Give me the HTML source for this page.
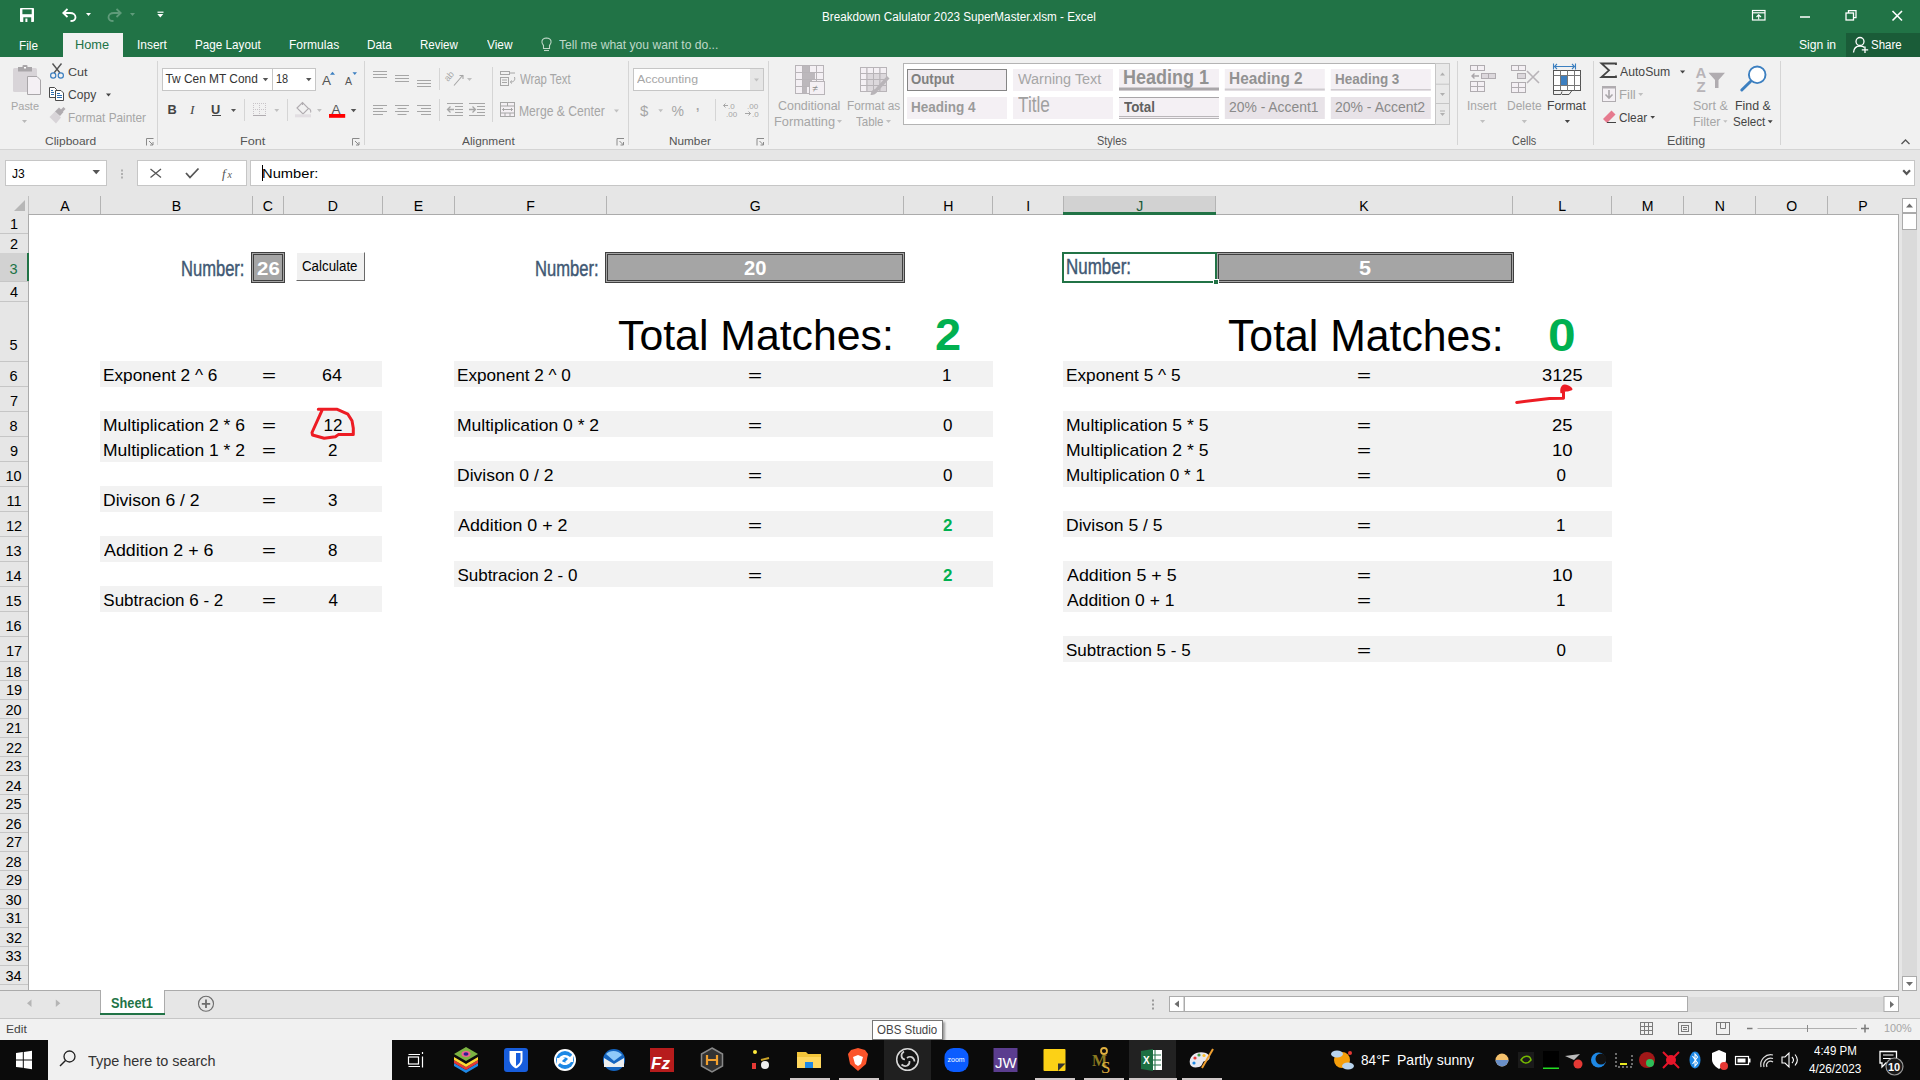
<!DOCTYPE html><html><head><meta charset='utf-8'><style>
*{margin:0;padding:0;box-sizing:border-box}
html,body{width:1920px;height:1080px;overflow:hidden;background:#fff;font-family:"Liberation Sans",sans-serif}
.a{position:absolute}
.t{position:absolute;white-space:pre;transform-origin:0 0}
svg{position:absolute;overflow:visible}
</style></head><body>

<div class='a' style='left:0px;top:0px;width:1920px;height:57px;background:#217346;'></div>
<div class='a' style='left:63px;top:33px;width:60px;height:24px;background:#f1f1f1;'></div>
<div class='a' style='left:1846px;top:33px;width:74px;height:24px;background:#1a5c38;'></div>
<div class='a' style='left:0;top:57px;width:1920px;height:92px;background:#f1f1f1'></div>
<div class='a' style='left:0px;top:149px;width:1920px;height:1px;background:#d4d4d4;'></div>
<div class='a' style='left:0px;top:150px;width:1920px;height:46px;background:#e6e6e6;'></div>
<div class='a' style='left:5px;top:160px;width:102px;height:26px;background:#fff;border:1px solid #c6c6c6;'></div>
<div class='a' style='left:137px;top:160px;width:110px;height:26px;background:#fff;border:1px solid #c6c6c6;'></div>
<div class='a' style='left:250px;top:160px;width:1665px;height:26px;background:#fff;border:1px solid #c6c6c6;'></div>
<svg style='left:0;top:0' width='1920' height='200'><rect x='20' y='8' width='14' height='14' rx='0.8' fill='#fff'/><rect x='22.4' y='9.4' width='9.3' height='4.8' fill='#217346'/><rect x='23.3' y='17.3' width='7.9' height='4.7' fill='#217346'/><rect x='25.4' y='18.5' width='2' height='3.5' fill='#fff'/><path d='M64,13 H70 C73.5,13 75.5,15 75.5,17.2 C75.5,19.5 73.5,21 70.5,21' fill='none' stroke='#fff' stroke-width='1.8'/><path d='M67.5,9 L63.3,13 L67.5,17' fill='none' stroke='#fff' stroke-width='1.8'/><polygon points='86,13 91,13 88.5,16.0' fill='#fff'/><path d='M120,13 H114 C110.5,13 108.5,15 108.5,17.2 C108.5,19.5 110.5,21 113.5,21' fill='none' stroke='#5f9b7a' stroke-width='1.8'/><path d='M116.5,9 L120.7,13 L116.5,17' fill='none' stroke='#5f9b7a' stroke-width='1.8'/><polygon points='130,13 135,13 132.5,16.0' fill='#5f9b7a'/><line x1='157.5' y1='12.2' x2='163.5' y2='12.2' stroke='#fff' stroke-width='1.2'/><polygon points='157.3,14 163.3,14 160.3,17.5' fill='#fff'/><rect x='1752.5' y='10.5' width='12.5' height='9.5' fill='none' stroke='#fff' stroke-width='1.2'/><line x1='1752.5' y1='12.8' x2='1765' y2='12.8' stroke='#fff' stroke-width='1.2'/><path d='M1758.7,19.5 V15 M1756.5,17 L1758.7,14.8 L1761,17' fill='none' stroke='#fff' stroke-width='1.1'/><line x1='1800' y1='17' x2='1810' y2='17' stroke='#fff' stroke-width='1.5'/><rect x='1846' y='13' width='7.5' height='7' fill='none' stroke='#fff' stroke-width='1.3'/><path d='M1848.5,13 V10.7 H1856 V17.7 H1853.5' fill='none' stroke='#fff' stroke-width='1.3'/><path d='M1892.5,11 L1902,20.5 M1902,11 L1892.5,20.5' stroke='#fff' stroke-width='1.6'/><circle cx='1860' cy='41.5' r='4' fill='none' stroke='#fff' stroke-width='1.3'/><path d='M1853.5,52.5 C1854,47 1857,46 1860,46 C1862,46 1863.5,46.5 1864.5,47.5' fill='none' stroke='#fff' stroke-width='1.3'/><path d='M1865,46.5 V53 M1861.8,49.8 H1868.2' stroke='#fff' stroke-width='1.3'/><path d='M543.5,45.5 C541,43 541,38.5 546.5,38 C552,38.5 552,43 549.5,45.5 V48.5 H543.5 Z' fill='none' stroke='#bfd8c8' stroke-width='1.1'/><line x1='544' y1='50.5' x2='549' y2='50.5' stroke='#bfd8c8' stroke-width='1.1'/><rect x='13' y='68' width='24' height='24' rx='1.5' fill='#d8d4d8'/><rect x='18' y='67' width='14' height='4.5' fill='#a9a6a9'/><rect x='22.5' y='65' width='5' height='3' rx='1' fill='#a9a6a9'/><rect x='24' y='67' width='2' height='1.5' fill='#fff'/><path d='M27.5,76.5 H37 L40.5,80 V94.5 H27.5 Z' fill='#f4f0f4' stroke='#a9a6a9' stroke-width='1'/><polygon points='22,120 27,120 24.5,123.0' fill='#b9b9b9'/><path d='M52.5,63.5 L60,73 M61.5,63.5 L54,73' stroke='#555' stroke-width='1.4'/><circle cx='53.2' cy='75.5' r='2.6' fill='none' stroke='#3c7fc0' stroke-width='1.2'/><circle cx='60.8' cy='75.5' r='2.6' fill='none' stroke='#3c7fc0' stroke-width='1.2'/><path d='M49.5,87.5 H54.5 L56.5,89.5 V97.5 H49.5 Z' fill='#fff' stroke='#4a4a4a' stroke-width='1'/><path d='M55.5,90.5 H61 L63.5,93 V100.5 H55.5 Z' fill='#fff' stroke='#4a4a4a' stroke-width='1'/><path d='M51,90.5 H53 M51,92.5 H54 M51,94.5 H54 M57,93.5 H60 M57,95.5 H62 M57,97.5 H62' stroke='#2b6cb0' stroke-width='1'/><polygon points='106,93.5 111,93.5 108.5,96.5' fill='#444444'/><path d='M49.5,117 L55,111.5 L61,117.5 L56,123.5 Z' fill='#d8d4d8'/><path d='M55,111.5 L59,107.5 L63.5,112 L60,116 Z' fill='#b0acb0'/><path d='M60.5,110 L63.5,107 L65.5,109 L62.5,112 Z' fill='#b0acb0'/><path d='M146.5,145.5 V138.5 H153.5' fill='none' stroke='#8a8a8a' stroke-width='1'/><path d='M149.0,141.0 L153.0,145.0 M153.0,142.0 V145.0 H150.0' fill='none' stroke='#8a8a8a' stroke-width='1'/><path d='M352.5,145.5 V138.5 H359.5' fill='none' stroke='#8a8a8a' stroke-width='1'/><path d='M355.0,141.0 L359.0,145.0 M359.0,142.0 V145.0 H356.0' fill='none' stroke='#8a8a8a' stroke-width='1'/><path d='M617,145.5 V138.5 H624' fill='none' stroke='#8a8a8a' stroke-width='1'/><path d='M619.5,141.0 L623.5,145.0 M623.5,142.0 V145.0 H620.5' fill='none' stroke='#8a8a8a' stroke-width='1'/><path d='M757,145.5 V138.5 H764' fill='none' stroke='#8a8a8a' stroke-width='1'/><path d='M759.5,141.0 L763.5,145.0 M763.5,142.0 V145.0 H760.5' fill='none' stroke='#8a8a8a' stroke-width='1'/><line x1='157.5' y1='61' x2='157.5' y2='145' stroke='#d5d5d5' stroke-width='1'/><line x1='364.5' y1='61' x2='364.5' y2='145' stroke='#d5d5d5' stroke-width='1'/><line x1='628.5' y1='61' x2='628.5' y2='145' stroke='#d5d5d5' stroke-width='1'/><line x1='768.5' y1='61' x2='768.5' y2='145' stroke='#d5d5d5' stroke-width='1'/><line x1='1457.5' y1='61' x2='1457.5' y2='145' stroke='#d5d5d5' stroke-width='1'/><line x1='1593.5' y1='61' x2='1593.5' y2='145' stroke='#d5d5d5' stroke-width='1'/><line x1='1780.5' y1='61' x2='1780.5' y2='145' stroke='#d5d5d5' stroke-width='1'/><rect x='162.5' y='68.5' width='110' height='22' fill='#fff' stroke='#c6c6c6' stroke-width='1'/><rect x='272.5' y='68.5' width='43' height='22' fill='#fff' stroke='#c6c6c6' stroke-width='1'/><polygon points='262.8,78 268.2,78 265.5,81.19999999999999' fill='#555'/><polygon points='306,78 311.5,78 308.75,81.25' fill='#555'/><text x='322' y='85' font-family='Liberation Sans' font-size='13.5' fill='#555'>A</text><polygon points='330,74.8 335,74.8 332.5,71.8' fill='#3c7fc0'/><text x='345' y='85' font-family='Liberation Sans' font-size='10.5' fill='#555'>A</text><polygon points='352.5,72.3 357,72.3 354.75,75.05' fill='#3c7fc0'/><text x='167.5' y='114' font-family='Liberation Sans' font-weight='bold' font-size='12.8' fill='#444'>B</text><text x='190' y='114' font-family='Liberation Serif' font-style='italic' font-size='13.5' fill='#444'>I</text><text x='211' y='114' font-family='Liberation Sans' font-weight='bold' font-size='12.8' fill='#444'>U</text><line x1='212' y1='115.5' x2='221' y2='115.5' stroke='#444' stroke-width='1'/><polygon points='231,109 236,109 233.5,112.0' fill='#555'/><line x1='244.5' y1='99' x2='244.5' y2='121' stroke='#d5d5d5' stroke-width='1'/><g fill='#c8c4c8'><rect x='253' y='103' width='1' height='1'/><rect x='253' y='109' width='1' height='1'/><rect x='255' y='103' width='1' height='1'/><rect x='255' y='109' width='1' height='1'/><rect x='257' y='103' width='1' height='1'/><rect x='257' y='109' width='1' height='1'/><rect x='259' y='103' width='1' height='1'/><rect x='259' y='109' width='1' height='1'/><rect x='261' y='103' width='1' height='1'/><rect x='261' y='109' width='1' height='1'/><rect x='263' y='103' width='1' height='1'/><rect x='263' y='109' width='1' height='1'/><rect x='265' y='103' width='1' height='1'/><rect x='265' y='109' width='1' height='1'/><rect x='253' y='103' width='1' height='1'/><rect x='259' y='103' width='1' height='1'/><rect x='265' y='103' width='1' height='1'/><rect x='253' y='105' width='1' height='1'/><rect x='259' y='105' width='1' height='1'/><rect x='265' y='105' width='1' height='1'/><rect x='253' y='107' width='1' height='1'/><rect x='259' y='107' width='1' height='1'/><rect x='265' y='107' width='1' height='1'/><rect x='253' y='109' width='1' height='1'/><rect x='259' y='109' width='1' height='1'/><rect x='265' y='109' width='1' height='1'/><rect x='253' y='111' width='1' height='1'/><rect x='259' y='111' width='1' height='1'/><rect x='265' y='111' width='1' height='1'/><rect x='253' y='113' width='1' height='1'/><rect x='259' y='113' width='1' height='1'/><rect x='265' y='113' width='1' height='1'/></g><line x1='253' y1='115.5' x2='266' y2='115.5' stroke='#b0acb0' stroke-width='1'/><polygon points='274.3,109 279.2,109 276.75,111.94999999999999' fill='#c0c0c0'/><line x1='287.5' y1='99' x2='287.5' y2='121' stroke='#d5d5d5' stroke-width='1'/><path d='M297,108 L302.5,102.5 L308.5,108.5 L303,114 Z' fill='none' stroke='#b0acb0' stroke-width='1.1'/><path d='M302.5,102.5 V105 M308.5,108.5 C311,109 311,112 310.5,112.5' fill='none' stroke='#b0acb0' stroke-width='1.1'/><rect x='295' y='114.3' width='16' height='3' fill='#e2dee2'/><polygon points='317,109 321.8,109 319.4,111.9' fill='#c0c0c0'/><text x='331.5' y='113.8' font-family='Liberation Sans' font-size='13.5' fill='#555'>A</text><rect x='329' y='114' width='16.2' height='3.8' fill='#ff0000'/><polygon points='350.8,109 356.3,109 353.55,112.25' fill='#555'/><line x1='373' y1='71.5' x2='387' y2='71.5' stroke='#a6a6a6' stroke-width='1'/><line x1='373' y1='74.5' x2='387' y2='74.5' stroke='#a6a6a6' stroke-width='1'/><line x1='373' y1='77.5' x2='387' y2='77.5' stroke='#a6a6a6' stroke-width='1'/><line x1='395' y1='75.5' x2='409' y2='75.5' stroke='#a6a6a6' stroke-width='1'/><line x1='395' y1='78.5' x2='409' y2='78.5' stroke='#a6a6a6' stroke-width='1'/><line x1='395' y1='81.5' x2='409' y2='81.5' stroke='#a6a6a6' stroke-width='1'/><line x1='417' y1='80.5' x2='431' y2='80.5' stroke='#a6a6a6' stroke-width='1'/><line x1='417' y1='83.5' x2='431' y2='83.5' stroke='#a6a6a6' stroke-width='1'/><line x1='417' y1='86.5' x2='431' y2='86.5' stroke='#a6a6a6' stroke-width='1'/><line x1='439.5' y1='68' x2='439.5' y2='90' stroke='#d5d5d5' stroke-width='1'/><text x='0' y='0' transform='translate(448,82) rotate(-50)' font-family='Liberation Sans' font-size='9' fill='#a6a6a6'>ab</text><path d='M454,85.5 L463,75 M459.5,75.5 H463 V79' fill='none' stroke='#a6a6a6' stroke-width='1.1'/><polygon points='467,78 472,78 469.5,81.0' fill='#c0c0c0'/><line x1='373' y1='105.5' x2='387' y2='105.5' stroke='#a6a6a6' stroke-width='1'/><line x1='395' y1='105.5' x2='409' y2='105.5' stroke='#a6a6a6' stroke-width='1'/><line x1='417' y1='105.5' x2='431' y2='105.5' stroke='#a6a6a6' stroke-width='1'/><line x1='373' y1='108.5' x2='383' y2='108.5' stroke='#a6a6a6' stroke-width='1'/><line x1='397.5' y1='108.5' x2='406.5' y2='108.5' stroke='#a6a6a6' stroke-width='1'/><line x1='421' y1='108.5' x2='431' y2='108.5' stroke='#a6a6a6' stroke-width='1'/><line x1='373' y1='111.5' x2='387' y2='111.5' stroke='#a6a6a6' stroke-width='1'/><line x1='395' y1='111.5' x2='409' y2='111.5' stroke='#a6a6a6' stroke-width='1'/><line x1='417' y1='111.5' x2='431' y2='111.5' stroke='#a6a6a6' stroke-width='1'/><line x1='373' y1='114.5' x2='383' y2='114.5' stroke='#a6a6a6' stroke-width='1'/><line x1='397.5' y1='114.5' x2='406.5' y2='114.5' stroke='#a6a6a6' stroke-width='1'/><line x1='421' y1='114.5' x2='431' y2='114.5' stroke='#a6a6a6' stroke-width='1'/><line x1='439.5' y1='99' x2='439.5' y2='121' stroke='#d5d5d5' stroke-width='1'/><line x1='447' y1='103.5' x2='463' y2='103.5' stroke='#a6a6a6' stroke-width='1'/><line x1='447' y1='115.5' x2='463' y2='115.5' stroke='#a6a6a6' stroke-width='1'/><line x1='455' y1='106.5' x2='463' y2='106.5' stroke='#a6a6a6' stroke-width='1'/><line x1='455' y1='109.5' x2='463' y2='109.5' stroke='#a6a6a6' stroke-width='1'/><line x1='455' y1='112.5' x2='463' y2='112.5' stroke='#a6a6a6' stroke-width='1'/><path d='M447.5,109.5 H454 M450.5,106.5 L447.5,109.5 L450.5,112.5' fill='none' stroke='#a6a6a6' stroke-width='1.3'/><line x1='469' y1='103.5' x2='485' y2='103.5' stroke='#a6a6a6' stroke-width='1'/><line x1='469' y1='115.5' x2='485' y2='115.5' stroke='#a6a6a6' stroke-width='1'/><line x1='477' y1='106.5' x2='485' y2='106.5' stroke='#a6a6a6' stroke-width='1'/><line x1='477' y1='109.5' x2='485' y2='109.5' stroke='#a6a6a6' stroke-width='1'/><line x1='477' y1='112.5' x2='485' y2='112.5' stroke='#a6a6a6' stroke-width='1'/><path d='M469,109.5 H475.5 M472.5,106.5 L475.5,109.5 L472.5,112.5' fill='none' stroke='#a6a6a6' stroke-width='1.3'/><line x1='492.5' y1='67' x2='492.5' y2='122' stroke='#d5d5d5' stroke-width='1'/><g fill='none' stroke='#a6a6a6' stroke-width='1'><rect x='500.5' y='71.5' width='9' height='3'/><rect x='500.5' y='77.5' width='8' height='8'/><path d='M502,80 H507 M502,82.5 H507 M509.5,73 H515 M514.5,77 C515.5,80 514,82 510.5,82 M512,80.5 L510.3,82 L512,83.5'/></g><g fill='#f4f0f4' stroke='#a6a6a6' stroke-width='1'><rect x='500.5' y='102.5' width='14' height='14'/></g><path d='M500.5,106 H514.5 M500.5,113 H514.5 M507.5,102.5 V106 M505,113 V116.5 M510,113 V116.5 M502.5,109.5 H512.5 M504,108 L502.5,109.5 L504,111 M511,108 L512.5,109.5 L511,111' fill='none' stroke='#a6a6a6' stroke-width='1'/><polygon points='614,109.5 619,109.5 616.5,112.5' fill='#c0c0c0'/><rect x='633.5' y='68.5' width='130' height='22' fill='#fff' stroke='#c6c6c6' stroke-width='1'/><rect x='750' y='69' width='13' height='21' fill='#e6e6e6'/><polygon points='754,78.5 759,78.5 756.5,81.5' fill='#c0c0c0'/><text x='640' y='115.5' font-family='Liberation Sans' font-size='15' fill='#a6a6a6'>$</text><polygon points='658.3,109.3 663,109.3 660.65,112.15000000000002' fill='#c0c0c0'/><text x='671.5' y='115.5' font-family='Liberation Sans' font-size='14' fill='#a6a6a6'>%</text><text x='696' y='110' font-family='Liberation Sans' font-weight='bold' font-size='12' fill='#a6a6a6'>,</text><line x1='715.5' y1='99' x2='715.5' y2='121' stroke='#d5d5d5' stroke-width='1'/><text x='728' y='109' font-family='Liberation Sans' font-size='8' fill='#a6a6a6'>.0</text><text x='726' y='116.5' font-family='Liberation Sans' font-size='8' fill='#a6a6a6'>.00</text><path d='M723.5,105.5 H728 M725.5,103.5 L723.5,105.5 L725.5,107.5' fill='none' stroke='#a6a6a6' stroke-width='1'/><text x='747' y='109' font-family='Liberation Sans' font-size='8' fill='#a6a6a6'>.00</text><text x='752' y='116.5' font-family='Liberation Sans' font-size='8' fill='#a6a6a6'>.0</text><path d='M745,113.5 H750.5 M748.5,111.5 L750.5,113.5 L748.5,115.5' fill='none' stroke='#a6a6a6' stroke-width='1'/><g stroke='#b8b4b8' stroke-width='1' fill='#f4f0f4'><rect x='795.5' y='65.5' width='7' height='7'/><rect x='802.5' y='65.5' width='7' height='7'/><rect x='809.5' y='65.5' width='7' height='7'/><rect x='816.5' y='65.5' width='7' height='7'/><rect x='795.5' y='72.5' width='7' height='7'/><rect x='802.5' y='72.5' width='7' height='7'/><rect x='809.5' y='72.5' width='7' height='7'/><rect x='816.5' y='72.5' width='7' height='7'/><rect x='795.5' y='79.5' width='7' height='7'/><rect x='802.5' y='79.5' width='7' height='7'/><rect x='809.5' y='79.5' width='7' height='7'/><rect x='816.5' y='79.5' width='7' height='7'/><rect x='795.5' y='86.5' width='7' height='7'/><rect x='802.5' y='86.5' width='7' height='7'/><rect x='809.5' y='86.5' width='7' height='7'/><rect x='816.5' y='86.5' width='7' height='7'/></g><rect x='803' y='66' width='6' height='6' fill='#bcb8bc'/><rect x='803' y='73' width='12' height='6' fill='#bcb8bc'/><rect x='803' y='80' width='9' height='6' fill='#bcb8bc'/><rect x='803' y='87' width='4' height='6' fill='#bcb8bc'/><rect x='809.5' y='81.5' width='15' height='13' fill='#f4f0f4' stroke='#b8b4b8' stroke-width='1'/><text x='812.5' y='92' font-family='Liberation Sans' font-size='10' fill='#8a8a8a'>≠</text><polygon points='837,120 842,120 839.5,123.0' fill='#c0c0c0'/><g stroke='#b8b4b8' stroke-width='1' fill='#f4f0f4'><rect x='860.5' y='67.5' width='6.5' height='6' fill='#f4f0f4'/><rect x='867.0' y='67.5' width='6.5' height='6' fill='#f4f0f4'/><rect x='873.5' y='67.5' width='6.5' height='6' fill='#f4f0f4'/><rect x='880.0' y='67.5' width='6.5' height='6' fill='#f4f0f4'/><rect x='860.5' y='73.5' width='6.5' height='6' fill='#f4f0f4'/><rect x='867.0' y='73.5' width='6.5' height='6' fill='#dcd8dc'/><rect x='873.5' y='73.5' width='6.5' height='6' fill='#dcd8dc'/><rect x='880.0' y='73.5' width='6.5' height='6' fill='#dcd8dc'/><rect x='860.5' y='79.5' width='6.5' height='6' fill='#f4f0f4'/><rect x='867.0' y='79.5' width='6.5' height='6' fill='#dcd8dc'/><rect x='873.5' y='79.5' width='6.5' height='6' fill='#dcd8dc'/><rect x='880.0' y='79.5' width='6.5' height='6' fill='#dcd8dc'/><rect x='860.5' y='85.5' width='6.5' height='6' fill='#f4f0f4'/><rect x='867.0' y='85.5' width='6.5' height='6' fill='#dcd8dc'/><rect x='873.5' y='85.5' width='6.5' height='6' fill='#dcd8dc'/><rect x='880.0' y='85.5' width='6.5' height='6' fill='#dcd8dc'/></g><path d='M872,94 L876,88 L887,76 L889.5,78.5 L879,90 Z' fill='#b8b4b8'/><path d='M870.5,95 C871,91 873,89 875.5,89 L877.5,91 C877,93.5 874,95 870.5,95 Z' fill='#b8b4b8'/><polygon points='886,120 891,120 888.5,123.0' fill='#c0c0c0'/><rect x='903.5' y='63.5' width='546' height='61' fill='#fff' stroke='#b4b4b4' stroke-width='1'/><rect x='1435.5' y='63.5' width='14' height='61' fill='#e9e9e9' stroke='#c6c6c6' stroke-width='1'/><line x1='1435.5' y1='84.2' x2='1449.5' y2='84.2' stroke='#c6c6c6' stroke-width='1'/><line x1='1435.5' y1='103.5' x2='1449.5' y2='103.5' stroke='#c6c6c6' stroke-width='1'/><polygon points='1440,75.5 1445,75.5 1442.5,72.5' fill='#b0b0b0'/><polygon points='1440,93 1445,93 1442.5,96.0' fill='#b0b0b0'/><line x1='1440' y1='111' x2='1445' y2='111' stroke='#b0b0b0' stroke-width='1'/><polygon points='1440,113 1445,113 1442.5,116.0' fill='#b0b0b0'/><rect x='907.5' y='69.5' width='99' height='21' fill='#efebef' stroke='#858585' stroke-width='1'/><rect x='1013' y='69' width='100' height='22' fill='#f4f0f4'/><rect x='1119' y='69' width='100' height='22' fill='#f4f0f4'/><rect x='1224.8' y='69' width='100' height='22' fill='#f4f0f4'/><rect x='1330.8' y='69' width='100' height='22' fill='#f4f0f4'/><rect x='907' y='97' width='100' height='22' fill='#f4f0f4'/><rect x='1013' y='97' width='100' height='22' fill='#f4f0f4'/><rect x='1119' y='97' width='100' height='22' fill='#f4f0f4'/><rect x='1224.8' y='97' width='100' height='22' fill='#e8e3e8'/><rect x='1330.8' y='97' width='100' height='22' fill='#e8e3e8'/><rect x='1119' y='87.5' width='100' height='3' fill='#a9a6a9'/><rect x='1224.8' y='88.5' width='100' height='2' fill='#cfcbcf'/><rect x='1330.8' y='89' width='100' height='1.5' fill='#cfcbcf'/><rect x='1119' y='97' width='100' height='1' fill='#a9a6a9'/><rect x='1119' y='116' width='100' height='1' fill='#b9b6b9'/><rect x='1119' y='118' width='100' height='1' fill='#b9b6b9'/><rect x='1470.5' y='65.5' width='7' height='5' fill='#f4f0f4' stroke='#b0acb0' stroke-width='1'/><rect x='1477.5' y='65.5' width='7' height='5' fill='#f4f0f4' stroke='#b0acb0' stroke-width='1'/><rect x='1481.5' y='73.5' width='7' height='5' fill='#dcd8dc' stroke='#b0acb0' stroke-width='1'/><rect x='1488.5' y='73.5' width='7' height='5' fill='#dcd8dc' stroke='#b0acb0' stroke-width='1'/><path d='M1472,76 H1479 M1474.5,73.5 L1472,76 L1474.5,78.5' fill='none' stroke='#a9a6a9' stroke-width='1.4'/><rect x='1470.5' y='81.5' width='7' height='5' fill='#f4f0f4' stroke='#b0acb0' stroke-width='1'/><rect x='1477.5' y='81.5' width='7' height='5' fill='#f4f0f4' stroke='#b0acb0' stroke-width='1'/><rect x='1470.5' y='86.5' width='7' height='5' fill='#f4f0f4' stroke='#b0acb0' stroke-width='1'/><rect x='1477.5' y='86.5' width='7' height='5' fill='#f4f0f4' stroke='#b0acb0' stroke-width='1'/><polygon points='1480,120 1485.2,120 1482.6,123.10000000000002' fill='#c0c0c0'/><rect x='1511.5' y='65.5' width='7' height='5' fill='#f4f0f4' stroke='#b0acb0' stroke-width='1'/><rect x='1518.5' y='65.5' width='7' height='5' fill='#f4f0f4' stroke='#b0acb0' stroke-width='1'/><rect x='1517.5' y='73.5' width='8' height='5' fill='#dcd8dc' stroke='#b0acb0' stroke-width='1'/><path d='M1527,71 L1539,83 M1539,71 L1527,83' stroke='#b8b4b8' stroke-width='1.6'/><rect x='1511.5' y='82.5' width='7' height='5' fill='#f4f0f4' stroke='#b0acb0' stroke-width='1'/><rect x='1518.5' y='82.5' width='7' height='5' fill='#f4f0f4' stroke='#b0acb0' stroke-width='1'/><rect x='1511.5' y='87.5' width='7' height='5' fill='#f4f0f4' stroke='#b0acb0' stroke-width='1'/><rect x='1518.5' y='87.5' width='7' height='5' fill='#f4f0f4' stroke='#b0acb0' stroke-width='1'/><polygon points='1521.7,120 1527,120 1524.35,123.14999999999998' fill='#c0c0c0'/><path d='M1554,66.5 H1575 M1557,64 L1554.5,66.5 L1557,69 M1572,64 L1574.5,66.5 L1572,69 M1553.5,63.5 V69.5 M1575.5,63.5 V69.5' fill='none' stroke='#3c7fc0' stroke-width='1.1'/><g fill='#fff' stroke='#555' stroke-width='1'><rect x='1553.5' y='70.5' width='27' height='20'/></g><path d='M1560.5,70.5 V90.5 M1567.5,70.5 V90.5 M1574.5,70.5 V90.5 M1553.5,75.5 H1580.5 M1553.5,85.5 H1580.5' fill='none' stroke='#777' stroke-width='1'/><rect x='1561' y='76' width='6' height='9' fill='#3c7fc0'/><path d='M1553.5,90.5 V94.5 H1561 L1562,91.5 M1562,94.5 H1569 L1572,90.5' fill='none' stroke='#555' stroke-width='1'/><polygon points='1564.8,120 1570,120 1567.4,123.10000000000002' fill='#444'/><path d='M1616,65 V63.5 H1601.5 L1609,70.3 L1601.5,77 H1616 V75.5' fill='none' stroke='#444' stroke-width='1.8'/><polygon points='1680,70.5 1685.2,70.5 1682.6,73.60000000000002' fill='#444'/><rect x='1602.5' y='86.5' width='13' height='15' fill='#f4f0f4' stroke='#b0acb0' stroke-width='1'/><rect x='1602' y='86' width='14' height='2.5' fill='#b0acb0'/><path d='M1609,90 V98 M1605.5,94.5 L1609,98 L1612.5,94.5' fill='none' stroke='#a9a6a9' stroke-width='1.6'/><polygon points='1638.2,93 1643.2,93 1640.7,96.0' fill='#c0c0c0'/><path d='M1603,119 L1611.5,110.5 L1615.5,114.5 L1607,123 Z' fill='#e67a8e'/><line x1='1607' y1='122.5' x2='1616' y2='122.5' stroke='#444' stroke-width='1'/><polygon points='1650.4,116 1655,116 1652.7,118.79999999999995' fill='#444'/><text x='1695.5' y='77.5' font-family='Liberation Sans' font-weight='bold' font-size='15' fill='#b8b4b8'>A</text><text x='1696.5' y='91.5' font-family='Liberation Sans' font-weight='bold' font-size='15' fill='#b8b4b8'>Z</text><path d='M1708.5,72.7 H1725 L1718.5,80 V88 H1715 V80 Z' fill='#b0acb0'/><polygon points='1723.2,120.2 1727.5,120.2 1725.35,122.84999999999998' fill='#c0c0c0'/><circle cx='1757.2' cy='74.8' r='8.3' fill='#fff' stroke='#3c7fc0' stroke-width='1.9'/><line x1='1750.5' y1='81.5' x2='1741.8' y2='90' stroke='#3c7fc0' stroke-width='3' stroke-linecap='round'/><polygon points='1767.7,120.2 1772.7,120.2 1770.2,123.2' fill='#444'/><path d='M1901.5,144 L1905.5,140 L1909.5,144' fill='none' stroke='#555' stroke-width='1.3'/><polygon points='92.5,170 100,170 96.25,174.25' fill='#555'/><rect x='121' y='169.5' width='2' height='2' fill='#b0b0b0'/><rect x='121' y='173' width='2' height='2' fill='#b0b0b0'/><rect x='121' y='176.5' width='2' height='2' fill='#b0b0b0'/><path d='M150.5,169 L161,177.5 M161,169 L150.5,177.5' stroke='#555' stroke-width='1.3'/><path d='M186,173 L190,177.5 L198.5,168.5' fill='none' stroke='#555' stroke-width='1.8'/><text x='222' y='178' font-family='Liberation Serif' font-style='italic' font-size='13' fill='#555'>f</text><text x='227.5' y='178' font-family='Liberation Serif' font-style='italic' font-size='10' fill='#555'>x</text><path d='M1903.2,170.3 L1906.6,173.8 L1910,170.3' fill='none' stroke='#555' stroke-width='2.2'/></svg>
<div class='t' style='left:822.11px;top:9px;font-size:13.08px;line-height:15px;color:#fff;font-weight:400;font-style:normal;font-family:"Liberation Sans",sans-serif;transform:scaleX(0.8947);'>Breakdown Calulator 2023 SuperMaster.xlsm - Excel</div>
<div class='t' style='left:19.10px;top:38px;font-size:13.08px;line-height:15px;color:#fff;font-weight:400;font-style:normal;font-family:"Liberation Sans",sans-serif;transform:scaleX(0.9000);'>File</div>
<div class='t' style='left:75.00px;top:37px;font-size:12.79px;line-height:15px;color:#217346;font-weight:400;font-style:normal;font-family:"Liberation Sans",sans-serif;'>Home</div>
<div class='t' style='left:137.06px;top:37px;font-size:12.79px;line-height:15px;color:#fff;font-weight:400;font-style:normal;font-family:"Liberation Sans",sans-serif;transform:scaleX(0.9355);'>Insert</div>
<div class='t' style='left:195.08px;top:37px;font-size:12.79px;line-height:15px;color:#fff;font-weight:400;font-style:normal;font-family:"Liberation Sans",sans-serif;transform:scaleX(0.9155);'>Page Layout</div>
<div class='t' style='left:289.06px;top:37px;font-size:12.79px;line-height:15px;color:#fff;font-weight:400;font-style:normal;font-family:"Liberation Sans",sans-serif;transform:scaleX(0.9423);'>Formulas</div>
<div class='t' style='left:367.08px;top:37px;font-size:12.79px;line-height:15px;color:#fff;font-weight:400;font-style:normal;font-family:"Liberation Sans",sans-serif;transform:scaleX(0.9231);'>Data</div>
<div class='t' style='left:420.10px;top:37px;font-size:12.79px;line-height:15px;color:#fff;font-weight:400;font-style:normal;font-family:"Liberation Sans",sans-serif;transform:scaleX(0.9024);'>Review</div>
<div class='t' style='left:487.00px;top:37px;font-size:12.79px;line-height:15px;color:#fff;font-weight:400;font-style:normal;font-family:"Liberation Sans",sans-serif;transform:scaleX(0.9259);'>View</div>
<div class='t' style='left:559.00px;top:37px;font-size:12.79px;line-height:15px;color:#bfd8c8;font-weight:400;font-style:normal;font-family:"Liberation Sans",sans-serif;transform:scaleX(0.9461);'>Tell me what you want to do...</div>
<div class='t' style='left:1799.04px;top:38px;font-size:12.65px;line-height:14px;color:#fff;font-weight:400;font-style:normal;font-family:"Liberation Sans",sans-serif;transform:scaleX(0.9595);'>Sign in</div>
<div class='t' style='left:1871.09px;top:38px;font-size:12.65px;line-height:14px;color:#fff;font-weight:400;font-style:normal;font-family:"Liberation Sans",sans-serif;transform:scaleX(0.9062);'>Share</div>
<div class='t' style='left:11.07px;top:99px;font-size:11.77px;line-height:13px;color:#a6a6a6;font-weight:400;font-style:normal;font-family:"Liberation Sans",sans-serif;transform:scaleX(0.9310);'>Paste</div>
<div class='t' style='left:67.52px;top:65px;font-size:11.63px;line-height:13px;color:#444444;font-weight:400;font-style:normal;font-family:"Liberation Sans",sans-serif;transform:scaleX(1.0824);'>Cut</div>
<div class='t' style='left:67.62px;top:88px;font-size:12.35px;line-height:14px;color:#444444;font-weight:400;font-style:normal;font-family:"Liberation Sans",sans-serif;transform:scaleX(0.9786);'>Copy</div>
<div class='t' style='left:67.62px;top:111px;font-size:12.06px;line-height:14px;color:#a6a6a6;font-weight:400;font-style:normal;font-family:"Liberation Sans",sans-serif;transform:scaleX(0.9797);'>Format Painter</div>
<div class='t' style='left:44.64px;top:135px;font-size:11.34px;line-height:12px;color:#555555;font-weight:400;font-style:normal;font-family:"Liberation Sans",sans-serif;transform:scaleX(1.0574);'>Clipboard</div>
<div class='t' style='left:239.91px;top:134px;font-size:11.63px;line-height:13px;color:#555555;font-weight:400;font-style:normal;font-family:"Liberation Sans",sans-serif;transform:scaleX(1.0909);'>Font</div>
<div class='t' style='left:462.00px;top:134px;font-size:11.63px;line-height:13px;color:#555555;font-weight:400;font-style:normal;font-family:"Liberation Sans",sans-serif;transform:scaleX(1.0192);'>Alignment</div>
<div class='t' style='left:669.49px;top:134px;font-size:11.63px;line-height:13px;color:#555555;font-weight:400;font-style:normal;font-family:"Liberation Sans",sans-serif;transform:scaleX(1.0125);'>Number</div>
<div class='t' style='left:1097.08px;top:134px;font-size:11.92px;line-height:14px;color:#555555;font-weight:400;font-style:normal;font-family:"Liberation Sans",sans-serif;transform:scaleX(0.9161);'>Styles</div>
<div class='t' style='left:1512.12px;top:134px;font-size:12.35px;line-height:14px;color:#555555;font-weight:400;font-style:normal;font-family:"Liberation Sans",sans-serif;transform:scaleX(0.8846);'>Cells</div>
<div class='t' style='left:1666.99px;top:134px;font-size:12.35px;line-height:14px;color:#555555;font-weight:400;font-style:normal;font-family:"Liberation Sans",sans-serif;transform:scaleX(1.0139);'>Editing</div>
<div class='t' style='left:165.40px;top:72px;font-size:11.92px;line-height:14px;color:#333;font-weight:400;font-style:normal;font-family:"Liberation Sans",sans-serif;'>Tw Cen MT Cond</div>
<div class='a' style='left:257.8px;top:69px;width:4px;height:21px;background:#fff;'></div>
<div class='t' style='left:276.08px;top:72px;font-size:11.92px;line-height:14px;color:#333;font-weight:400;font-style:normal;font-family:"Liberation Sans",sans-serif;transform:scaleX(0.9167);'>18</div>
<div class='t' style='left:636.70px;top:72px;font-size:11.63px;line-height:13px;color:#a6a6a6;font-weight:400;font-style:normal;font-family:"Liberation Sans",sans-serif;transform:scaleX(1.0614);'>Accounting</div>
<div class='t' style='left:910.90px;top:71px;font-size:14.68px;line-height:16px;color:#808080;font-weight:700;font-style:normal;font-family:"Liberation Sans",sans-serif;transform:scaleX(0.8979);'>Output</div>
<div class='t' style='left:1017.50px;top:71px;font-size:14.68px;line-height:16px;color:#a6a6a6;font-weight:400;font-style:normal;font-family:"Liberation Sans",sans-serif;transform:scaleX(0.9824);'>Warning Text</div>
<div class='t' style='left:1122.72px;top:65px;font-size:20.49px;line-height:23px;color:#929292;font-weight:700;font-style:normal;font-family:"Liberation Sans",sans-serif;transform:scaleX(0.8792);'>Heading 1</div>
<div class='t' style='left:1228.65px;top:69px;font-size:16.28px;line-height:18px;color:#929292;font-weight:700;font-style:normal;font-family:"Liberation Sans",sans-serif;transform:scaleX(0.9474);'>Heading 2</div>
<div class='t' style='left:1334.98px;top:71px;font-size:14.68px;line-height:16px;color:#929292;font-weight:700;font-style:normal;font-family:"Liberation Sans",sans-serif;transform:scaleX(0.9174);'>Heading 3</div>
<div class='t' style='left:910.88px;top:99px;font-size:14.68px;line-height:16px;color:#9a9a9a;font-weight:700;font-style:normal;font-family:"Liberation Sans",sans-serif;transform:scaleX(0.9217);'>Heading 4</div>
<div class='t' style='left:1017.50px;top:92px;font-size:21.66px;line-height:25px;color:#a0a0a0;font-weight:400;font-style:normal;font-family:"Liberation Sans",sans-serif;transform:scaleX(0.7949);'>Title</div>
<div class='t' style='left:1123.60px;top:99px;font-size:14.68px;line-height:16px;color:#606060;font-weight:700;font-style:normal;font-family:"Liberation Sans",sans-serif;transform:scaleX(0.9121);'>Total</div>
<div class='t' style='left:1228.65px;top:99px;font-size:14.68px;line-height:16px;color:#8a8a8a;font-weight:400;font-style:normal;font-family:"Liberation Sans",sans-serif;transform:scaleX(0.9462);'>20% - Accent1</div>
<div class='t' style='left:1334.95px;top:99px;font-size:14.68px;line-height:16px;color:#8a8a8a;font-weight:400;font-style:normal;font-family:"Liberation Sans",sans-serif;transform:scaleX(0.9527);'>20% - Accent2</div>
<div class='t' style='left:519.50px;top:72px;font-size:13.81px;line-height:15px;color:#a6a6a6;font-weight:400;font-style:normal;font-family:"Liberation Sans",sans-serif;transform:scaleX(0.8226);'>Wrap Text</div>
<div class='t' style='left:518.62px;top:104px;font-size:13.81px;line-height:15px;color:#a6a6a6;font-weight:400;font-style:normal;font-family:"Liberation Sans",sans-serif;transform:scaleX(0.8802);'>Merge &amp; Center</div>
<div class='t' style='left:778.05px;top:98px;font-size:13.08px;line-height:15px;color:#a6a6a6;font-weight:400;font-style:normal;font-family:"Liberation Sans",sans-serif;transform:scaleX(0.9531);'>Conditional</div>
<div class='t' style='left:773.96px;top:115px;font-size:12.35px;line-height:14px;color:#a6a6a6;font-weight:400;font-style:normal;font-family:"Liberation Sans",sans-serif;transform:scaleX(1.0351);'>Formatting</div>
<div class='t' style='left:846.60px;top:98px;font-size:13.08px;line-height:15px;color:#a6a6a6;font-weight:400;font-style:normal;font-family:"Liberation Sans",sans-serif;transform:scaleX(0.9035);'>Format as</div>
<div class='t' style='left:856.00px;top:115px;font-size:12.35px;line-height:14px;color:#a6a6a6;font-weight:400;font-style:normal;font-family:"Liberation Sans",sans-serif;transform:scaleX(0.9310);'>Table</div>
<div class='t' style='left:1467.09px;top:98px;font-size:13.08px;line-height:15px;color:#a6a6a6;font-weight:400;font-style:normal;font-family:"Liberation Sans",sans-serif;transform:scaleX(0.9062);'>Insert</div>
<div class='t' style='left:1507.08px;top:98px;font-size:13.08px;line-height:15px;color:#a6a6a6;font-weight:400;font-style:normal;font-family:"Liberation Sans",sans-serif;transform:scaleX(0.9167);'>Delete</div>
<div class='t' style='left:1547.06px;top:98px;font-size:13.08px;line-height:15px;color:#444444;font-weight:400;font-style:normal;font-family:"Liberation Sans",sans-serif;transform:scaleX(0.9375);'>Format</div>
<div class='t' style='left:1620.00px;top:64px;font-size:13.08px;line-height:15px;color:#444444;font-weight:400;font-style:normal;font-family:"Liberation Sans",sans-serif;transform:scaleX(0.9340);'>AutoSum</div>
<div class='t' style='left:1619.00px;top:87px;font-size:13.08px;line-height:15px;color:#a6a6a6;font-weight:400;font-style:normal;font-family:"Liberation Sans",sans-serif;'>Fill</div>
<div class='t' style='left:1619.10px;top:110px;font-size:13.08px;line-height:15px;color:#444444;font-weight:400;font-style:normal;font-family:"Liberation Sans",sans-serif;transform:scaleX(0.9000);'>Clear</div>
<div class='t' style='left:1693.04px;top:98px;font-size:13.08px;line-height:15px;color:#a6a6a6;font-weight:400;font-style:normal;font-family:"Liberation Sans",sans-serif;transform:scaleX(0.9571);'>Sort &amp;</div>
<div class='t' style='left:1693.00px;top:115px;font-size:12.35px;line-height:14px;color:#a6a6a6;font-weight:400;font-style:normal;font-family:"Liberation Sans",sans-serif;'>Filter</div>
<div class='t' style='left:1735.05px;top:98px;font-size:13.08px;line-height:15px;color:#444444;font-weight:400;font-style:normal;font-family:"Liberation Sans",sans-serif;transform:scaleX(0.9459);'>Find &amp;</div>
<div class='t' style='left:1733.06px;top:115px;font-size:12.35px;line-height:14px;color:#444444;font-weight:400;font-style:normal;font-family:"Liberation Sans",sans-serif;transform:scaleX(0.9394);'>Select</div>
<div class='t' style='left:12.00px;top:166px;font-size:13.08px;line-height:15px;color:#000;font-weight:400;font-style:normal;font-family:"Liberation Sans",sans-serif;transform:scaleX(0.9231);'>J3</div>
<div class='t' style='left:261.88px;top:166px;font-size:13.08px;line-height:15px;color:#000;font-weight:400;font-style:normal;font-family:"Liberation Sans",sans-serif;transform:scaleX(1.1250);'>Number:</div>
<div class='a' style='left:262px;top:165px;width:1px;height:16px;background:#000;'></div>
<div class='a' style='left:0px;top:214px;width:1898px;height:776px;background:#fff;'></div>
<div class='a' style='left:0px;top:196px;width:1898px;height:18px;background:#e6e6e6;'></div>
<div class='a' style='left:1063px;top:196px;width:153px;height:18px;background:#d2d2d2;'></div>
<div class='a' style='left:100px;top:196px;width:1px;height:18px;background:#b4b4b4;'></div>
<div class='a' style='left:252px;top:196px;width:1px;height:18px;background:#b4b4b4;'></div>
<div class='a' style='left:283px;top:196px;width:1px;height:18px;background:#b4b4b4;'></div>
<div class='a' style='left:382px;top:196px;width:1px;height:18px;background:#b4b4b4;'></div>
<div class='a' style='left:454px;top:196px;width:1px;height:18px;background:#b4b4b4;'></div>
<div class='a' style='left:606px;top:196px;width:1px;height:18px;background:#b4b4b4;'></div>
<div class='a' style='left:903px;top:196px;width:1px;height:18px;background:#b4b4b4;'></div>
<div class='a' style='left:992px;top:196px;width:1px;height:18px;background:#b4b4b4;'></div>
<div class='a' style='left:1063px;top:196px;width:1px;height:18px;background:#b4b4b4;'></div>
<div class='a' style='left:1215px;top:196px;width:1px;height:18px;background:#b4b4b4;'></div>
<div class='a' style='left:1512px;top:196px;width:1px;height:18px;background:#b4b4b4;'></div>
<div class='a' style='left:1611px;top:196px;width:1px;height:18px;background:#b4b4b4;'></div>
<div class='a' style='left:1683px;top:196px;width:1px;height:18px;background:#b4b4b4;'></div>
<div class='a' style='left:1755px;top:196px;width:1px;height:18px;background:#b4b4b4;'></div>
<div class='a' style='left:1827px;top:196px;width:1px;height:18px;background:#b4b4b4;'></div>
<div class='a' style='left:28px;top:196px;width:1px;height:18px;background:#c0c0c0;'></div>
<div class='a' style='left:0px;top:214px;width:1898px;height:1px;background:#ababab;'></div>
<div class='a' style='left:1063px;top:212px;width:153px;height:3px;background:#217346;'></div>
<div class='t' style='left:60.30px;top:198px;font-size:14.10px;line-height:16px;color:#000;font-weight:400;font-style:normal;font-family:"Liberation Sans",sans-serif;'>A</div>
<div class='t' style='left:171.80px;top:198px;font-size:14.10px;line-height:16px;color:#000;font-weight:400;font-style:normal;font-family:"Liberation Sans",sans-serif;'>B</div>
<div class='t' style='left:262.80px;top:198px;font-size:14.10px;line-height:16px;color:#000;font-weight:400;font-style:normal;font-family:"Liberation Sans",sans-serif;'>C</div>
<div class='t' style='left:327.80px;top:198px;font-size:14.10px;line-height:16px;color:#000;font-weight:400;font-style:normal;font-family:"Liberation Sans",sans-serif;'>D</div>
<div class='t' style='left:413.80px;top:198px;font-size:14.10px;line-height:16px;color:#000;font-weight:400;font-style:normal;font-family:"Liberation Sans",sans-serif;'>E</div>
<div class='t' style='left:526.30px;top:198px;font-size:14.10px;line-height:16px;color:#000;font-weight:400;font-style:normal;font-family:"Liberation Sans",sans-serif;'>F</div>
<div class='t' style='left:749.80px;top:198px;font-size:14.10px;line-height:16px;color:#000;font-weight:400;font-style:normal;font-family:"Liberation Sans",sans-serif;'>G</div>
<div class='t' style='left:943.30px;top:198px;font-size:14.10px;line-height:16px;color:#000;font-weight:400;font-style:normal;font-family:"Liberation Sans",sans-serif;'>H</div>
<div class='t' style='left:1026.30px;top:198px;font-size:14.10px;line-height:16px;color:#000;font-weight:400;font-style:normal;font-family:"Liberation Sans",sans-serif;'>I</div>
<div class='t' style='left:1136.30px;top:198px;font-size:14.10px;line-height:16px;color:#1d5a38;font-weight:400;font-style:normal;font-family:"Liberation Sans",sans-serif;'>J</div>
<div class='t' style='left:1359.30px;top:198px;font-size:14.10px;line-height:16px;color:#000;font-weight:400;font-style:normal;font-family:"Liberation Sans",sans-serif;'>K</div>
<div class='t' style='left:1558.30px;top:198px;font-size:14.10px;line-height:16px;color:#000;font-weight:400;font-style:normal;font-family:"Liberation Sans",sans-serif;'>L</div>
<div class='t' style='left:1641.80px;top:198px;font-size:14.10px;line-height:16px;color:#000;font-weight:400;font-style:normal;font-family:"Liberation Sans",sans-serif;'>M</div>
<div class='t' style='left:1714.80px;top:198px;font-size:14.10px;line-height:16px;color:#000;font-weight:400;font-style:normal;font-family:"Liberation Sans",sans-serif;'>N</div>
<div class='t' style='left:1786.30px;top:198px;font-size:14.10px;line-height:16px;color:#000;font-weight:400;font-style:normal;font-family:"Liberation Sans",sans-serif;'>O</div>
<div class='t' style='left:1858.30px;top:198px;font-size:14.10px;line-height:16px;color:#000;font-weight:400;font-style:normal;font-family:"Liberation Sans",sans-serif;'>P</div>
<svg style='left:14px;top:200px' width='12' height='12'><polygon points='11,0 11,11 0,11' fill='#b7b7b7'/></svg>
<div class='a' style='left:0px;top:214px;width:29px;height:776px;background:#e6e6e6;'></div>
<div class='a' style='left:28px;top:214px;width:1px;height:776px;background:#ababab;'></div>
<div class='a' style='left:0px;top:233px;width:28px;height:1px;background:#c6c6c6;'></div>
<div class='t' style='left:10.00px;top:216px;font-size:14.53px;line-height:16px;color:#000;font-weight:400;font-style:normal;font-family:"Liberation Sans",sans-serif;'>1</div>
<div class='a' style='left:0px;top:253px;width:28px;height:1px;background:#c6c6c6;'></div>
<div class='t' style='left:10.00px;top:236px;font-size:14.53px;line-height:16px;color:#000;font-weight:400;font-style:normal;font-family:"Liberation Sans",sans-serif;'>2</div>
<div class='a' style='left:0px;top:253px;width:28px;height:28px;background:#d2d2d2;'></div>
<div class='a' style='left:27px;top:253px;width:2px;height:28px;background:#217346;'></div>
<div class='a' style='left:0px;top:281px;width:28px;height:1px;background:#c6c6c6;'></div>
<div class='t' style='left:9.50px;top:261px;font-size:14.53px;line-height:16px;color:#217346;font-weight:400;font-style:normal;font-family:"Liberation Sans",sans-serif;'>3</div>
<div class='a' style='left:0px;top:301px;width:28px;height:1px;background:#c6c6c6;'></div>
<div class='t' style='left:10.00px;top:284px;font-size:14.53px;line-height:16px;color:#000;font-weight:400;font-style:normal;font-family:"Liberation Sans",sans-serif;'>4</div>
<div class='a' style='left:0px;top:361px;width:28px;height:1px;background:#c6c6c6;'></div>
<div class='t' style='left:9.50px;top:337px;font-size:14.53px;line-height:16px;color:#000;font-weight:400;font-style:normal;font-family:"Liberation Sans",sans-serif;'>5</div>
<div class='a' style='left:0px;top:386px;width:28px;height:1px;background:#c6c6c6;'></div>
<div class='t' style='left:9.50px;top:368px;font-size:14.53px;line-height:16px;color:#000;font-weight:400;font-style:normal;font-family:"Liberation Sans",sans-serif;'>6</div>
<div class='a' style='left:0px;top:411px;width:28px;height:1px;background:#c6c6c6;'></div>
<div class='t' style='left:10.00px;top:393px;font-size:14.53px;line-height:16px;color:#000;font-weight:400;font-style:normal;font-family:"Liberation Sans",sans-serif;'>7</div>
<div class='a' style='left:0px;top:436px;width:28px;height:1px;background:#c6c6c6;'></div>
<div class='t' style='left:9.50px;top:418px;font-size:14.53px;line-height:16px;color:#000;font-weight:400;font-style:normal;font-family:"Liberation Sans",sans-serif;'>8</div>
<div class='a' style='left:0px;top:461px;width:28px;height:1px;background:#c6c6c6;'></div>
<div class='t' style='left:10.00px;top:443px;font-size:14.53px;line-height:16px;color:#000;font-weight:400;font-style:normal;font-family:"Liberation Sans",sans-serif;'>9</div>
<div class='a' style='left:0px;top:486px;width:28px;height:1px;background:#c6c6c6;'></div>
<div class='t' style='left:5.50px;top:468px;font-size:14.53px;line-height:16px;color:#000;font-weight:400;font-style:normal;font-family:"Liberation Sans",sans-serif;'>10</div>
<div class='a' style='left:0px;top:511px;width:28px;height:1px;background:#c6c6c6;'></div>
<div class='t' style='left:6.50px;top:493px;font-size:14.53px;line-height:16px;color:#000;font-weight:400;font-style:normal;font-family:"Liberation Sans",sans-serif;'>11</div>
<div class='a' style='left:0px;top:536px;width:28px;height:1px;background:#c6c6c6;'></div>
<div class='t' style='left:6.00px;top:518px;font-size:14.53px;line-height:16px;color:#000;font-weight:400;font-style:normal;font-family:"Liberation Sans",sans-serif;'>12</div>
<div class='a' style='left:0px;top:561px;width:28px;height:1px;background:#c6c6c6;'></div>
<div class='t' style='left:5.50px;top:543px;font-size:14.53px;line-height:16px;color:#000;font-weight:400;font-style:normal;font-family:"Liberation Sans",sans-serif;'>13</div>
<div class='a' style='left:0px;top:586px;width:28px;height:1px;background:#c6c6c6;'></div>
<div class='t' style='left:5.50px;top:568px;font-size:14.53px;line-height:16px;color:#000;font-weight:400;font-style:normal;font-family:"Liberation Sans",sans-serif;'>14</div>
<div class='a' style='left:0px;top:611px;width:28px;height:1px;background:#c6c6c6;'></div>
<div class='t' style='left:5.50px;top:593px;font-size:14.53px;line-height:16px;color:#000;font-weight:400;font-style:normal;font-family:"Liberation Sans",sans-serif;'>15</div>
<div class='a' style='left:0px;top:636px;width:28px;height:1px;background:#c6c6c6;'></div>
<div class='t' style='left:5.50px;top:618px;font-size:14.53px;line-height:16px;color:#000;font-weight:400;font-style:normal;font-family:"Liberation Sans",sans-serif;'>16</div>
<div class='a' style='left:0px;top:661px;width:28px;height:1px;background:#c6c6c6;'></div>
<div class='t' style='left:6.00px;top:643px;font-size:14.53px;line-height:16px;color:#000;font-weight:400;font-style:normal;font-family:"Liberation Sans",sans-serif;'>17</div>
<div class='a' style='left:0px;top:680px;width:28px;height:1px;background:#c6c6c6;'></div>
<div class='t' style='left:5.50px;top:664px;font-size:14.53px;line-height:16px;color:#000;font-weight:400;font-style:normal;font-family:"Liberation Sans",sans-serif;'>18</div>
<div class='a' style='left:0px;top:699px;width:28px;height:1px;background:#c6c6c6;'></div>
<div class='t' style='left:6.00px;top:682px;font-size:14.53px;line-height:16px;color:#000;font-weight:400;font-style:normal;font-family:"Liberation Sans",sans-serif;'>19</div>
<div class='a' style='left:0px;top:718px;width:28px;height:1px;background:#c6c6c6;'></div>
<div class='t' style='left:5.50px;top:702px;font-size:14.53px;line-height:16px;color:#000;font-weight:400;font-style:normal;font-family:"Liberation Sans",sans-serif;'>20</div>
<div class='a' style='left:0px;top:737px;width:28px;height:1px;background:#c6c6c6;'></div>
<div class='t' style='left:6.00px;top:720px;font-size:14.53px;line-height:16px;color:#000;font-weight:400;font-style:normal;font-family:"Liberation Sans",sans-serif;'>21</div>
<div class='a' style='left:0px;top:756px;width:28px;height:1px;background:#c6c6c6;'></div>
<div class='t' style='left:6.00px;top:740px;font-size:14.53px;line-height:16px;color:#000;font-weight:400;font-style:normal;font-family:"Liberation Sans",sans-serif;'>22</div>
<div class='a' style='left:0px;top:775px;width:28px;height:1px;background:#c6c6c6;'></div>
<div class='t' style='left:5.50px;top:758px;font-size:14.53px;line-height:16px;color:#000;font-weight:400;font-style:normal;font-family:"Liberation Sans",sans-serif;'>23</div>
<div class='a' style='left:0px;top:794px;width:28px;height:1px;background:#c6c6c6;'></div>
<div class='t' style='left:5.50px;top:778px;font-size:14.53px;line-height:16px;color:#000;font-weight:400;font-style:normal;font-family:"Liberation Sans",sans-serif;'>24</div>
<div class='a' style='left:0px;top:813px;width:28px;height:1px;background:#c6c6c6;'></div>
<div class='t' style='left:5.50px;top:796px;font-size:14.53px;line-height:16px;color:#000;font-weight:400;font-style:normal;font-family:"Liberation Sans",sans-serif;'>25</div>
<div class='a' style='left:0px;top:832px;width:28px;height:1px;background:#c6c6c6;'></div>
<div class='t' style='left:5.50px;top:816px;font-size:14.53px;line-height:16px;color:#000;font-weight:400;font-style:normal;font-family:"Liberation Sans",sans-serif;'>26</div>
<div class='a' style='left:0px;top:851px;width:28px;height:1px;background:#c6c6c6;'></div>
<div class='t' style='left:6.00px;top:834px;font-size:14.53px;line-height:16px;color:#000;font-weight:400;font-style:normal;font-family:"Liberation Sans",sans-serif;'>27</div>
<div class='a' style='left:0px;top:870px;width:28px;height:1px;background:#c6c6c6;'></div>
<div class='t' style='left:5.50px;top:854px;font-size:14.53px;line-height:16px;color:#000;font-weight:400;font-style:normal;font-family:"Liberation Sans",sans-serif;'>28</div>
<div class='a' style='left:0px;top:889px;width:28px;height:1px;background:#c6c6c6;'></div>
<div class='t' style='left:6.00px;top:872px;font-size:14.53px;line-height:16px;color:#000;font-weight:400;font-style:normal;font-family:"Liberation Sans",sans-serif;'>29</div>
<div class='a' style='left:0px;top:908px;width:28px;height:1px;background:#c6c6c6;'></div>
<div class='t' style='left:5.50px;top:892px;font-size:14.53px;line-height:16px;color:#000;font-weight:400;font-style:normal;font-family:"Liberation Sans",sans-serif;'>30</div>
<div class='a' style='left:0px;top:927px;width:28px;height:1px;background:#c6c6c6;'></div>
<div class='t' style='left:6.00px;top:910px;font-size:14.53px;line-height:16px;color:#000;font-weight:400;font-style:normal;font-family:"Liberation Sans",sans-serif;'>31</div>
<div class='a' style='left:0px;top:946px;width:28px;height:1px;background:#c6c6c6;'></div>
<div class='t' style='left:6.00px;top:930px;font-size:14.53px;line-height:16px;color:#000;font-weight:400;font-style:normal;font-family:"Liberation Sans",sans-serif;'>32</div>
<div class='a' style='left:0px;top:965px;width:28px;height:1px;background:#c6c6c6;'></div>
<div class='t' style='left:5.50px;top:948px;font-size:14.53px;line-height:16px;color:#000;font-weight:400;font-style:normal;font-family:"Liberation Sans",sans-serif;'>33</div>
<div class='a' style='left:0px;top:984px;width:28px;height:1px;background:#c6c6c6;'></div>
<div class='t' style='left:5.50px;top:968px;font-size:14.53px;line-height:16px;color:#000;font-weight:400;font-style:normal;font-family:"Liberation Sans",sans-serif;'>34</div>
<div class='a' style='left:0px;top:990px;width:1899px;height:1px;background:#ababab;'></div>
<div class='a' style='left:1899px;top:990px;width:21px;height:1px;background:#e6e6e6;'></div>
<div class='a' style='left:1898px;top:214px;width:1px;height:776px;background:#ababab;'></div>
<div class='a' style='left:1898px;top:196px;width:22px;height:794px;background:#e6e6e6;'></div>
<div class='a' style='left:1902px;top:229px;width:15px;height:747px;background:#dadada;'></div>
<div class='a' style='left:1898px;top:214px;width:1px;height:776px;background:#ababab;'></div>
<div class='a' style='left:100px;top:361px;width:282px;height:26px;background:#f2f2f2;'></div>
<div class='a' style='left:100px;top:411px;width:282px;height:51px;background:#f2f2f2;'></div>
<div class='a' style='left:100px;top:486px;width:282px;height:26px;background:#f2f2f2;'></div>
<div class='a' style='left:100px;top:536px;width:282px;height:26px;background:#f2f2f2;'></div>
<div class='a' style='left:100px;top:586px;width:282px;height:26px;background:#f2f2f2;'></div>
<div class='a' style='left:454px;top:361px;width:539px;height:26px;background:#f2f2f2;'></div>
<div class='a' style='left:454px;top:411px;width:539px;height:26px;background:#f2f2f2;'></div>
<div class='a' style='left:454px;top:461px;width:539px;height:26px;background:#f2f2f2;'></div>
<div class='a' style='left:454px;top:511px;width:539px;height:26px;background:#f2f2f2;'></div>
<div class='a' style='left:454px;top:561px;width:539px;height:26px;background:#f2f2f2;'></div>
<div class='a' style='left:1063px;top:361px;width:549px;height:26px;background:#f2f2f2;'></div>
<div class='a' style='left:1063px;top:411px;width:549px;height:76px;background:#f2f2f2;'></div>
<div class='a' style='left:1063px;top:511px;width:549px;height:26px;background:#f2f2f2;'></div>
<div class='a' style='left:1063px;top:561px;width:549px;height:51px;background:#f2f2f2;'></div>
<div class='a' style='left:1063px;top:636px;width:549px;height:26px;background:#f2f2f2;'></div>
<div class='t' style='left:103.29px;top:366px;font-size:17.01px;line-height:19px;color:#000;font-weight:400;font-style:normal;font-family:"Liberation Sans",sans-serif;transform:scaleX(1.0126);'>Exponent 2 ^ 6</div>
<div class='t' style='left:261.64px;top:366px;font-size:17.00px;line-height:19px;color:#000;font-weight:400;font-style:normal;font-family:"Liberation Sans",sans-serif;transform:scaleX(1.4125);'>=</div>
<div class='t' style='left:322.24px;top:366px;font-size:17.01px;line-height:19px;color:#000;font-weight:400;font-style:normal;font-family:"Liberation Sans",sans-serif;transform:scaleX(1.0556);'>64</div>
<div class='t' style='left:103.27px;top:416px;font-size:17.01px;line-height:19px;color:#000;font-weight:400;font-style:normal;font-family:"Liberation Sans",sans-serif;transform:scaleX(1.0294);'>Multiplication 2 * 6</div>
<div class='t' style='left:261.64px;top:416px;font-size:17.00px;line-height:19px;color:#000;font-weight:400;font-style:normal;font-family:"Liberation Sans",sans-serif;transform:scaleX(1.4125);'>=</div>
<div class='t' style='left:323.50px;top:416px;font-size:17.01px;line-height:19px;color:#000;font-weight:400;font-style:normal;font-family:"Liberation Sans",sans-serif;'>12</div>
<div class='t' style='left:103.27px;top:441px;font-size:17.01px;line-height:19px;color:#000;font-weight:400;font-style:normal;font-family:"Liberation Sans",sans-serif;transform:scaleX(1.0294);'>Multiplication 1 * 2</div>
<div class='t' style='left:261.64px;top:441px;font-size:17.00px;line-height:19px;color:#000;font-weight:400;font-style:normal;font-family:"Liberation Sans",sans-serif;transform:scaleX(1.4125);'>=</div>
<div class='t' style='left:328.00px;top:441px;font-size:17.01px;line-height:19px;color:#000;font-weight:400;font-style:normal;font-family:"Liberation Sans",sans-serif;'>2</div>
<div class='t' style='left:103.27px;top:491px;font-size:17.01px;line-height:19px;color:#000;font-weight:400;font-style:normal;font-family:"Liberation Sans",sans-serif;transform:scaleX(1.0326);'>Divison 6 / 2</div>
<div class='t' style='left:261.64px;top:491px;font-size:17.00px;line-height:19px;color:#000;font-weight:400;font-style:normal;font-family:"Liberation Sans",sans-serif;transform:scaleX(1.4125);'>=</div>
<div class='t' style='left:328.00px;top:491px;font-size:17.01px;line-height:19px;color:#000;font-weight:400;font-style:normal;font-family:"Liberation Sans",sans-serif;'>3</div>
<div class='t' style='left:104.30px;top:541px;font-size:17.01px;line-height:19px;color:#000;font-weight:400;font-style:normal;font-family:"Liberation Sans",sans-serif;transform:scaleX(1.0481);'>Addition 2 + 6</div>
<div class='t' style='left:261.64px;top:541px;font-size:17.00px;line-height:19px;color:#000;font-weight:400;font-style:normal;font-family:"Liberation Sans",sans-serif;transform:scaleX(1.4125);'>=</div>
<div class='t' style='left:328.00px;top:541px;font-size:17.01px;line-height:19px;color:#000;font-weight:400;font-style:normal;font-family:"Liberation Sans",sans-serif;'>8</div>
<div class='t' style='left:103.30px;top:591px;font-size:17.01px;line-height:19px;color:#000;font-weight:400;font-style:normal;font-family:"Liberation Sans",sans-serif;'>Subtracion 6 - 2</div>
<div class='t' style='left:261.64px;top:591px;font-size:17.00px;line-height:19px;color:#000;font-weight:400;font-style:normal;font-family:"Liberation Sans",sans-serif;transform:scaleX(1.4125);'>=</div>
<div class='t' style='left:328.50px;top:591px;font-size:17.01px;line-height:19px;color:#000;font-weight:400;font-style:normal;font-family:"Liberation Sans",sans-serif;'>4</div>
<div class='t' style='left:457.39px;top:366px;font-size:17.01px;line-height:19px;color:#000;font-weight:400;font-style:normal;font-family:"Liberation Sans",sans-serif;transform:scaleX(1.0090);'>Exponent 2 ^ 0</div>
<div class='t' style='left:748.14px;top:366px;font-size:17.00px;line-height:19px;color:#000;font-weight:400;font-style:normal;font-family:"Liberation Sans",sans-serif;transform:scaleX(1.4125);'>=</div>
<div class='t' style='left:942.00px;top:366px;font-size:17.01px;line-height:19px;color:#000;font-weight:400;font-style:normal;font-family:"Liberation Sans",sans-serif;'>1</div>
<div class='t' style='left:457.37px;top:416px;font-size:17.01px;line-height:19px;color:#000;font-weight:400;font-style:normal;font-family:"Liberation Sans",sans-serif;transform:scaleX(1.0301);'>Multiplication 0 * 2</div>
<div class='t' style='left:748.14px;top:416px;font-size:17.00px;line-height:19px;color:#000;font-weight:400;font-style:normal;font-family:"Liberation Sans",sans-serif;transform:scaleX(1.4125);'>=</div>
<div class='t' style='left:943.00px;top:416px;font-size:17.01px;line-height:19px;color:#000;font-weight:400;font-style:normal;font-family:"Liberation Sans",sans-serif;'>0</div>
<div class='t' style='left:457.37px;top:466px;font-size:17.01px;line-height:19px;color:#000;font-weight:400;font-style:normal;font-family:"Liberation Sans",sans-serif;transform:scaleX(1.0304);'>Divison 0 / 2</div>
<div class='t' style='left:748.14px;top:466px;font-size:17.00px;line-height:19px;color:#000;font-weight:400;font-style:normal;font-family:"Liberation Sans",sans-serif;transform:scaleX(1.4125);'>=</div>
<div class='t' style='left:943.00px;top:466px;font-size:17.01px;line-height:19px;color:#000;font-weight:400;font-style:normal;font-family:"Liberation Sans",sans-serif;'>0</div>
<div class='t' style='left:458.40px;top:516px;font-size:17.01px;line-height:19px;color:#000;font-weight:400;font-style:normal;font-family:"Liberation Sans",sans-serif;transform:scaleX(1.0481);'>Addition 0 + 2</div>
<div class='t' style='left:748.14px;top:516px;font-size:17.00px;line-height:19px;color:#000;font-weight:400;font-style:normal;font-family:"Liberation Sans",sans-serif;transform:scaleX(1.4125);'>=</div>
<div class='t' style='left:943.00px;top:516px;font-size:17.01px;line-height:19px;color:#00b050;font-weight:700;font-style:normal;font-family:"Liberation Sans",sans-serif;'>2</div>
<div class='t' style='left:457.40px;top:566px;font-size:17.01px;line-height:19px;color:#000;font-weight:400;font-style:normal;font-family:"Liberation Sans",sans-serif;'>Subtracion 2 - 0</div>
<div class='t' style='left:748.14px;top:566px;font-size:17.00px;line-height:19px;color:#000;font-weight:400;font-style:normal;font-family:"Liberation Sans",sans-serif;transform:scaleX(1.4125);'>=</div>
<div class='t' style='left:943.00px;top:566px;font-size:17.01px;line-height:19px;color:#00b050;font-weight:700;font-style:normal;font-family:"Liberation Sans",sans-serif;'>2</div>
<div class='t' style='left:1065.89px;top:366px;font-size:17.01px;line-height:19px;color:#000;font-weight:400;font-style:normal;font-family:"Liberation Sans",sans-serif;transform:scaleX(1.0144);'>Exponent 5 ^ 5</div>
<div class='t' style='left:1357.44px;top:366px;font-size:17.00px;line-height:19px;color:#000;font-weight:400;font-style:normal;font-family:"Liberation Sans",sans-serif;transform:scaleX(1.4125);'>=</div>
<div class='t' style='left:1541.58px;top:366px;font-size:17.01px;line-height:19px;color:#000;font-weight:400;font-style:normal;font-family:"Liberation Sans",sans-serif;transform:scaleX(1.0750);'>3125</div>
<div class='t' style='left:1065.87px;top:416px;font-size:17.01px;line-height:19px;color:#000;font-weight:400;font-style:normal;font-family:"Liberation Sans",sans-serif;transform:scaleX(1.0324);'>Multiplication 5 * 5</div>
<div class='t' style='left:1357.44px;top:416px;font-size:17.00px;line-height:19px;color:#000;font-weight:400;font-style:normal;font-family:"Liberation Sans",sans-serif;transform:scaleX(1.4125);'>=</div>
<div class='t' style='left:1551.86px;top:416px;font-size:17.01px;line-height:19px;color:#000;font-weight:400;font-style:normal;font-family:"Liberation Sans",sans-serif;transform:scaleX(1.0882);'>25</div>
<div class='t' style='left:1065.87px;top:441px;font-size:17.01px;line-height:19px;color:#000;font-weight:400;font-style:normal;font-family:"Liberation Sans",sans-serif;transform:scaleX(1.0324);'>Multiplication 2 * 5</div>
<div class='t' style='left:1357.44px;top:441px;font-size:17.00px;line-height:19px;color:#000;font-weight:400;font-style:normal;font-family:"Liberation Sans",sans-serif;transform:scaleX(1.4125);'>=</div>
<div class='t' style='left:1551.86px;top:441px;font-size:17.01px;line-height:19px;color:#000;font-weight:400;font-style:normal;font-family:"Liberation Sans",sans-serif;transform:scaleX(1.0882);'>10</div>
<div class='t' style='left:1065.89px;top:466px;font-size:17.01px;line-height:19px;color:#000;font-weight:400;font-style:normal;font-family:"Liberation Sans",sans-serif;transform:scaleX(1.0081);'>Multiplication 0 * 1</div>
<div class='t' style='left:1357.44px;top:466px;font-size:17.00px;line-height:19px;color:#000;font-weight:400;font-style:normal;font-family:"Liberation Sans",sans-serif;transform:scaleX(1.4125);'>=</div>
<div class='t' style='left:1556.60px;top:466px;font-size:17.01px;line-height:19px;color:#000;font-weight:400;font-style:normal;font-family:"Liberation Sans",sans-serif;'>0</div>
<div class='t' style='left:1065.87px;top:516px;font-size:17.01px;line-height:19px;color:#000;font-weight:400;font-style:normal;font-family:"Liberation Sans",sans-serif;transform:scaleX(1.0326);'>Divison 5 / 5</div>
<div class='t' style='left:1357.44px;top:516px;font-size:17.00px;line-height:19px;color:#000;font-weight:400;font-style:normal;font-family:"Liberation Sans",sans-serif;transform:scaleX(1.4125);'>=</div>
<div class='t' style='left:1556.00px;top:516px;font-size:17.01px;line-height:19px;color:#000;font-weight:400;font-style:normal;font-family:"Liberation Sans",sans-serif;'>1</div>
<div class='t' style='left:1066.90px;top:566px;font-size:17.01px;line-height:19px;color:#000;font-weight:400;font-style:normal;font-family:"Liberation Sans",sans-serif;transform:scaleX(1.0490);'>Addition 5 + 5</div>
<div class='t' style='left:1357.44px;top:566px;font-size:17.00px;line-height:19px;color:#000;font-weight:400;font-style:normal;font-family:"Liberation Sans",sans-serif;transform:scaleX(1.4125);'>=</div>
<div class='t' style='left:1551.86px;top:566px;font-size:17.01px;line-height:19px;color:#000;font-weight:400;font-style:normal;font-family:"Liberation Sans",sans-serif;transform:scaleX(1.0882);'>10</div>
<div class='t' style='left:1066.90px;top:591px;font-size:17.01px;line-height:19px;color:#000;font-weight:400;font-style:normal;font-family:"Liberation Sans",sans-serif;transform:scaleX(1.0288);'>Addition 0 + 1</div>
<div class='t' style='left:1357.44px;top:591px;font-size:17.00px;line-height:19px;color:#000;font-weight:400;font-style:normal;font-family:"Liberation Sans",sans-serif;transform:scaleX(1.4125);'>=</div>
<div class='t' style='left:1556.00px;top:591px;font-size:17.01px;line-height:19px;color:#000;font-weight:400;font-style:normal;font-family:"Liberation Sans",sans-serif;'>1</div>
<div class='t' style='left:1065.90px;top:641px;font-size:17.01px;line-height:19px;color:#000;font-weight:400;font-style:normal;font-family:"Liberation Sans",sans-serif;'>Subtraction 5 - 5</div>
<div class='t' style='left:1357.44px;top:641px;font-size:17.00px;line-height:19px;color:#000;font-weight:400;font-style:normal;font-family:"Liberation Sans",sans-serif;transform:scaleX(1.4125);'>=</div>
<div class='t' style='left:1556.60px;top:641px;font-size:17.01px;line-height:19px;color:#000;font-weight:400;font-style:normal;font-family:"Liberation Sans",sans-serif;'>0</div>
<div class='t' style='left:618.21px;top:311px;font-size:43.31px;line-height:48px;color:#000;font-weight:400;font-style:normal;font-family:"Liberation Sans",sans-serif;transform:scaleX(0.9883);'>Total Matches:</div>
<div class='t' style='left:935.41px;top:309px;font-size:45.06px;line-height:51px;color:#00b050;font-weight:700;font-style:normal;font-family:"Liberation Sans",sans-serif;transform:scaleX(1.0429);'>2</div>
<div class='t' style='left:1227.74px;top:311px;font-size:44.48px;line-height:49px;color:#000;font-weight:400;font-style:normal;font-family:"Liberation Sans",sans-serif;transform:scaleX(0.9610);'>Total Matches:</div>
<div class='t' style='left:1548.23px;top:310px;font-size:45.78px;line-height:51px;color:#00b050;font-weight:700;font-style:normal;font-family:"Liberation Sans",sans-serif;transform:scaleX(1.0864);'>0</div>
<div class='t' style='left:181.48px;top:256px;font-size:21.80px;line-height:25px;color:#3f5873;font-weight:400;font-style:normal;font-family:"Liberation Sans",sans-serif;transform:scaleX(0.7594);-webkit-text-stroke:0.45px #3f5873;'>Number:</div>
<div class='t' style='left:535.38px;top:256px;font-size:21.80px;line-height:25px;color:#3f5873;font-weight:400;font-style:normal;font-family:"Liberation Sans",sans-serif;transform:scaleX(0.7612);-webkit-text-stroke:0.45px #3f5873;'>Number:</div>
<div class='t' style='left:1066.15px;top:254px;font-size:21.95px;line-height:25px;color:#3f5873;font-weight:400;font-style:normal;font-family:"Liberation Sans",sans-serif;transform:scaleX(0.7725);-webkit-text-stroke:0.45px #3f5873;'>Number:</div>
<div class='a' style='left:251px;top:252px;width:34px;height:31px;background:#a5a5a5;border:3px double #3f3f3f;'></div>
<div class='a' style='left:605px;top:252px;width:300px;height:31px;background:#a5a5a5;border:3px double #3f3f3f;'></div>
<div class='a' style='left:1216px;top:252px;width:298px;height:31px;background:#a5a5a5;border:3px double #3f3f3f;'></div>
<div class='t' style='left:256.60px;top:258px;font-size:18.60px;line-height:21px;color:#fff;font-weight:700;font-style:normal;font-family:"Liberation Sans",sans-serif;transform:scaleX(1.1000);'>26</div>
<div class='t' style='left:743.97px;top:257px;font-size:19.48px;line-height:22px;color:#fff;font-weight:700;font-style:normal;font-family:"Liberation Sans",sans-serif;transform:scaleX(1.0350);'>20</div>
<div class='t' style='left:1358.59px;top:257px;font-size:19.48px;line-height:22px;color:#fff;font-weight:700;font-style:normal;font-family:"Liberation Sans",sans-serif;transform:scaleX(1.1111);'>5</div>
<div class='a' style='left:296px;top:252px;width:69px;height:29px;background:#f0f0f0;border-top:1px solid #fff;border-left:1px solid #fff;border-right:1px solid #696969;border-bottom:1px solid #696969;'></div>
<div class='t' style='left:302.08px;top:258px;font-size:14.53px;line-height:16px;color:#000;font-weight:400;font-style:normal;font-family:"Liberation Sans",sans-serif;transform:scaleX(0.9169);'>Calculate</div>
<div class='a' style='left:1062px;top:252px;width:155px;height:31px;border:2px solid #217346;'></div>
<div class='a' style='left:1213px;top:279px;width:6px;height:6px;background:#217346;border:1px solid #fff;'></div>
<svg style='left:0;top:0' width='1920' height='1080'><g fill='none' stroke='#ed1c24' stroke-width='3' stroke-linejoin='round' stroke-linecap='round'><path d='M318.3,409.2 L336.7,409.2 L347.9,414.2 L352,420.8 L353.3,428.3 L353.3,434.6 L338.3,434.6 L335.4,436.7 L324.2,438.3 L312.5,435 L312,432.5 L322,410.4'/><path d='M1516.7,402.4 L1549.5,398.5 L1563.5,398.3 L1563.5,392.3'/></g><path d='M1560.4,393 C1559.5,386 1563,384.5 1565,384.5 C1569,385 1572.7,387.5 1572.5,389.5 C1572,391 1566,391.5 1564,392 C1562,393.5 1560.5,393.5 1560.4,393 Z' fill='#ed1c24'/></svg>
<div class='a' style='left:0px;top:991px;width:1920px;height:27px;background:#e6e6e6;'></div>
<div class='a' style='left:0px;top:1018px;width:1920px;height:22px;background:#f1f1f1;'></div>
<div class='a' style='left:0px;top:1018px;width:1920px;height:1px;background:#c6c6c6;'></div>
<div class='a' style='left:100px;top:990px;width:65px;height:25px;background:#fff;border-left:1px solid #ababab;border-right:1px solid #ababab;'></div>
<div class='a' style='left:100px;top:1013px;width:65px;height:2px;background:#217346;'></div>
<div class='t' style='left:111.10px;top:995px;font-size:14.24px;line-height:16px;color:#217346;font-weight:700;font-style:normal;font-family:"Liberation Sans",sans-serif;transform:scaleX(0.8956);'>Sheet1</div>
<div class='t' style='left:6.32px;top:1023px;font-size:11.19px;line-height:12px;color:#444;font-weight:400;font-style:normal;font-family:"Liberation Sans",sans-serif;transform:scaleX(1.0778);'>Edit</div>
<svg style='left:0;top:0' width='1920' height='1080'><rect x='1902.5' y='198.5' width='14' height='14' fill='#fff' stroke='#ababab'/><polygon points='1906,207.5 1913,207.5 1909.5,203.5' fill='#6d6d6d'/><rect x='1902.5' y='213.5' width='14' height='16' fill='#fff' stroke='#ababab'/><rect x='1902.5' y='976.5' width='14' height='14' fill='#fff' stroke='#ababab'/><polygon points='1906,982 1913,982 1909.5,986' fill='#6d6d6d'/><polygon points='31.5,999.5 31.5,1007 27,1003.2' fill='#b5b5b5'/><polygon points='55.8,999.5 55.8,1007 60.3,1003.2' fill='#b5b5b5'/><circle cx='206' cy='1003.8' r='7.5' fill='none' stroke='#6d6d6d' stroke-width='1.1'/><path d='M206,999.5 V1008 M201.8,1003.8 H210.2' stroke='#6d6d6d' stroke-width='1.8'/><rect x='1152' y='999.5' width='2' height='2' fill='#9a9a9a'/><rect x='1152' y='1003.5' width='2' height='2' fill='#9a9a9a'/><rect x='1152' y='1007.5' width='2' height='2' fill='#9a9a9a'/><rect x='1169' y='997' width='729' height='15' fill='#dadada'/><rect x='1169.5' y='996.5' width='14.5' height='15' fill='#fff' stroke='#ababab'/><polygon points='1179,1000.5 1179,1007.5 1174.5,1004' fill='#6d6d6d'/><rect x='1184.5' y='996.5' width='503' height='15' fill='#fff' stroke='#ababab'/><rect x='1884' y='996.5' width='14.5' height='15' fill='#fff' stroke='#ababab'/><polygon points='1890,1001 1890,1008 1894,1004.5' fill='#6d6d6d'/><g fill='none' stroke='#7a7a7a' stroke-width='1'><rect x='1640.5' y='1022.5' width='12' height='12'/><path d='M1644.5,1022.5 V1034.5 M1648.5,1022.5 V1034.5 M1640.5,1026.5 H1652.5 M1640.5,1030.5 H1652.5'/><rect x='1678.5' y='1022.5' width='13' height='12'/><rect x='1681.5' y='1025.5' width='7' height='6'/><path d='M1683,1027.5 H1687 M1683,1029.5 H1687'/><rect x='1716.5' y='1022.5' width='13' height='12'/><path d='M1720.5,1022.5 V1028.5 H1725.5 V1022.5'/></g><path d='M1747,1028.5 H1752.5' stroke='#7a7a7a' stroke-width='1.5'/><path d='M1757.5,1028.5 H1857' stroke='#b0b0b0' stroke-width='1'/><path d='M1807.5,1025 V1032' stroke='#8a8a8a' stroke-width='1'/><path d='M1861,1028.5 H1869 M1865,1024.5 V1032.5' stroke='#7a7a7a' stroke-width='1.5'/></svg>
<div class='t' style='left:1883.57px;top:1021px;font-size:11.63px;line-height:13px;color:#a6a6a6;font-weight:400;font-style:normal;font-family:"Liberation Sans",sans-serif;transform:scaleX(0.9321);'>100%</div>
<div class='a' style='left:872px;top:1020px;width:71px;height:20px;background:#fff;border:1px solid #767676;box-shadow:2px 2px 2px rgba(0,0,0,.35);'></div>
<div class='t' style='left:877.12px;top:1022px;font-size:13.08px;line-height:15px;color:#444;font-weight:400;font-style:normal;font-family:"Liberation Sans",sans-serif;transform:scaleX(0.8806);'>OBS Studio</div>
<div class='a' style='left:0px;top:1040px;width:1920px;height:40px;background:#0b0b0b;'></div>
<div class='a' style='left:48px;top:1040px;width:344px;height:40px;background:#f0f0f0;'></div>
<svg style='left:0;top:0' width='1920' height='1080'><g fill='#fff'><path d='M16,1053 L22.8,1052 V1059.4 H16 Z'/><path d='M23.8,1051.9 L32,1050.7 V1059.4 H23.8 Z'/><path d='M16,1060.4 H22.8 V1067.8 L16,1066.9 Z'/><path d='M23.8,1060.4 H32 V1069.2 L23.8,1068 Z'/></g><circle cx='69.5' cy='1056.5' r='5.5' fill='none' stroke='#222' stroke-width='1.3'/><path d='M65.5,1060.5 L60,1066' stroke='#222' stroke-width='1.5'/><g fill='none' stroke='#fff' stroke-width='1.2'><path d='M408.5,1054.5 H420 M408.5,1066.5 H420'/><rect x='408.5' y='1057' width='10' height='7'/><path d='M422.5,1052 V1054 M422.5,1056.5 V1067.5'/></g><g transform='translate(466,1060)'><path d='M-12,3 L0,10 L12,3 V6 L0,13 L-12,6 Z' fill='#1e88e5'/><path d='M-12,0 L0,7 L12,0 V3 L0,10 L-12,3 Z' fill='#e53935'/><path d='M-12,-3 L0,4 L12,-3 V0 L0,7 L-12,0 Z' fill='#fdd835'/><path d='M-12,-6 L0,1 L12,-6 L0,-13 Z' fill='#7cb342'/><ellipse cx='0' cy='-6' rx='4.5' ry='3' fill='#f06292'/><ellipse cx='0' cy='-6' rx='2.5' ry='1.7' fill='#311b92'/></g><rect x='504.0' y='1048.0' width='24' height='24' rx='3' fill='#175ddc'/><path d='M509.5,1051 H522.5 V1060 C522.5,1065 516,1068.5 516,1068.5 C516,1068.5 509.5,1065 509.5,1060 Z' fill='#fff'/><path d='M516,1053 H520.5 V1060 C520.5,1063.5 516,1066 516,1066 Z' fill='#175ddc'/><circle cx='565' cy='1060' r='11' fill='#fff'/><circle cx='565' cy='1060' r='9' fill='#1e88e5'/><path d='M558,1062 C558,1055 566,1053 570,1057 L573,1054 V1062 H565 L568,1059 C565,1056 561,1058 561,1062 Z M572,1058 C572,1065 564,1067 560,1063 L557,1066 V1058 H565 L562,1061 C565,1064 569,1062 569,1058 Z' fill='#fff'/><circle cx='614' cy='1060' r='11' fill='#1565c0'/><path d='M604,1058 L614,1064 L624,1058 V1067 H604 Z' fill='#eceff1'/><path d='M606,1054 C610,1050 618,1050 622,1055 L614,1061 Z' fill='#90caf9'/><rect x='650.0' y='1048.0' width='24' height='24' rx='0' fill='#b71c1c'/><text x='651' y='1069' font-family='Liberation Sans' font-weight='bold' font-style='italic' font-size='17' fill='#fff'>Fz</text><path d='M712,1048 L722.5,1054 V1066 L712,1072 L701.5,1066 V1054 Z' fill='#333' stroke='#888' stroke-width='1.5'/><path d='M707,1055 V1065 M717,1055 V1065 M707,1060 H717' stroke='#f0a030' stroke-width='2.2'/><circle cx='755' cy='1052' r='2' fill='#ffeb3b'/><rect x='752' y='1063' width='4' height='6' fill='#e53935'/><circle cx='765' cy='1065' r='4' fill='#eee'/><path d='M761,1060 L769,1058' stroke='#c9a227' stroke-width='2'/><path d='M797,1052 H806 L808,1054 H821 V1068 H797 Z' fill='#f3c53a'/><rect x='797' y='1057' width='24' height='11' fill='#ffd75e'/><rect x='805' y='1062' width='8' height='6' fill='#1e88e5'/><path d='M851,1050 L858,1048 L865,1050 L868,1054 L866,1064 L858,1071 L850,1064 L848,1054 Z' fill='#fb542b'/><path d='M853,1057 L858,1055 L863,1057 L861,1064 L858,1066 L855,1064 Z' fill='#fff'/><rect x='884' y='1040' width='47' height='40' fill='#202020'/><circle cx='907.5' cy='1059.5' r='10.8' fill='#141414' stroke='#d8d8d8' stroke-width='1.5'/><path d='M904,1051.5 C900,1054 901,1059 905,1059.5 M914.5,1061.5 C914,1057 910,1055.5 907,1058 M901.5,1064.5 C905,1067.5 910,1066 909.5,1061' fill='none' stroke='#cfcfcf' stroke-width='1.7'/><rect x='944.5' y='1048' width='24' height='24' rx='9' fill='#0b5cff'/><text x='947.5' y='1062' font-family='Liberation Sans' font-size='7' fill='#fff'>zoom</text><rect x='993.5' y='1048.0' width='24' height='24' rx='0' fill='#5b3d8f'/><text x='995' y='1068' font-family='Liberation Sans' font-size='15' fill='#fff'>JW</text><rect x='1043.5' y='1049.0' width='22' height='22' rx='1' fill='#fcd116'/><path d='M1058,1071 L1065.5,1063.5 H1058 Z' fill='#333'/><text x='1092' y='1066' font-family='Liberation Serif' font-weight='bold' font-size='16' fill='#8a7a20'>M</text><text x='1101' y='1073' font-family='Liberation Serif' font-size='17' fill='#e0b040'>S</text><circle cx='1104' cy='1051' r='3' fill='none' stroke='#e0b040' stroke-width='1.8'/><rect x='1129' y='1040' width='47' height='40' fill='#222'/><rect x='1148' y='1050' width='14' height='20' fill='#fff'/><path d='M1149.5,1055 H1161 M1149.5,1060 H1161 M1149.5,1065 H1161 M1155,1050 V1070' stroke='#1d6f42' stroke-width='1'/><path d='M1141,1051 L1153,1049 V1071 L1141,1069 Z' fill='#1d6f42'/><text x='1143' y='1064' font-family='Liberation Sans' font-weight='bold' font-size='10' fill='#fff'>X</text><path d='M1190,1064 C1188,1055 1198,1050 1206,1053 C1212,1056 1210,1061 1205,1061 C1202,1061 1203,1066 1199,1067 C1194,1068 1191,1067 1190,1064 Z' fill='#e8e8f0'/><circle cx='1195' cy='1058' r='1.6' fill='#e53935'/><circle cx='1199' cy='1055' r='1.6' fill='#43a047'/><circle cx='1204' cy='1055.5' r='1.6' fill='#fbc02d'/><circle cx='1194' cy='1063' r='1.6' fill='#1e88e5'/><path d='M1213,1049 L1202,1068' stroke='#f0a030' stroke-width='2'/><rect x='790' y='1078' width='40' height='2' fill='#cfc8c8'/><rect x='839' y='1078' width='40' height='2' fill='#cfc8c8'/><rect x='1035' y='1078' width='40' height='2' fill='#cfc8c8'/><rect x='1084' y='1078' width='40' height='2' fill='#cfc8c8'/><rect x='1129' y='1078' width='48' height='2' fill='#cfc8c8'/><rect x='1182' y='1078' width='40' height='2' fill='#cfc8c8'/><circle cx='1342' cy='1060' r='8' fill='#f59e0b'/><circle cx='1350' cy='1053' r='2' fill='#e53935'/><ellipse cx='1337' cy='1054' rx='6' ry='3.5' fill='#b9d4ee'/><ellipse cx='1348' cy='1066' rx='6' ry='3.5' fill='#b9d4ee'/><circle cx='1502' cy='1060' r='6.5' fill='#f4c06c'/><path d='M1495.5,1060 A6.5,6.5 0 0 0 1508.5,1060 Z' fill='#6a8fc7'/><rect x='1518' y='1052' width='16' height='16' fill='#1a1a1a'/><path d='M1521,1060 C1524,1055 1530,1055 1531,1060 C1528,1064 1524,1064 1521,1060 Z' fill='none' stroke='#76b900' stroke-width='1.5'/><rect x='1543' y='1051' width='16' height='18' fill='#000'/><rect x='1543' y='1067.5' width='16' height='1.5' fill='#22dd22'/><path d='M1565,1056 L1580,1054 L1574,1060 Z' fill='#bbb'/><circle cx='1578' cy='1064' r='4.5' fill='#e53935'/><circle cx='1598.5' cy='1060' r='7.5' fill='#1e88e5'/><circle cx='1601' cy='1059' r='5.5' fill='#111'/><path d='M1616,1053 V1067 H1632 V1053' fill='none' stroke='#ccc' stroke-width='1' stroke-dasharray='2,2'/><rect x='1620' y='1063' width='7' height='2' fill='#e8e820'/><circle cx='1647' cy='1060' r='8' fill='#a01818'/><circle cx='1650' cy='1063' r='4' fill='#2ebd59'/><circle cx='1671' cy='1060' r='5' fill='#e8152a'/><path d='M1663,1052 L1679,1068 M1679,1052 L1663,1068' stroke='#e8152a' stroke-width='2'/><ellipse cx='1695' cy='1060' rx='5.5' ry='8.5' fill='#1e88e5'/><path d='M1692.5,1056 L1697.5,1063 L1695,1066 V1054 L1697.5,1057 L1692.5,1064' fill='none' stroke='#fff' stroke-width='1.1'/><path d='M1712,1053 L1719,1050 L1726,1053 V1060 C1726,1065 1719,1069 1719,1069 C1719,1069 1712,1065 1712,1060 Z' fill='#fff'/><circle cx='1724' cy='1066' r='4' fill='#e53935'/><rect x='1735.5' y='1056.5' width='13' height='8' fill='none' stroke='#fff' stroke-width='1.2'/><rect x='1737.5' y='1058.5' width='8' height='4' fill='#fff'/><rect x='1749' y='1058.5' width='1.5' height='4' fill='#fff'/><path d='M1761,1067 A10,10 0 0 1 1773,1055 M1764,1067 A7,7 0 0 1 1773,1058.5 M1767,1067 A4,4 0 0 1 1773,1062' fill='none' stroke='#ddd' stroke-width='1.2'/><path d='M1782,1057 H1785 L1789,1053 V1067 L1785,1063 H1782 Z' fill='none' stroke='#fff' stroke-width='1.1'/><path d='M1792,1057 C1794,1059 1794,1061 1792,1063 M1795,1054.5 C1798,1058 1798,1062 1795,1065.5' fill='none' stroke='#fff' stroke-width='1.1'/><path d='M1880,1051.5 H1896.5 V1063 H1886 L1882,1067 V1063 H1880 Z' fill='none' stroke='#fff' stroke-width='1.3'/><path d='M1883,1055 H1893.5 M1883,1058.5 H1893.5' stroke='#fff' stroke-width='1.2'/><circle cx='1894.5' cy='1066.5' r='8.5' fill='#1a1a1a' stroke='#9a9a9a' stroke-width='1.2'/><text x='1888' y='1071' font-family='Liberation Sans' font-weight='bold' font-size='11' fill='#fff'>10</text></svg>
<div class='t' style='left:88.40px;top:1052px;font-size:15.12px;line-height:17px;color:#333;font-weight:400;font-style:normal;font-family:"Liberation Sans",sans-serif;transform:scaleX(0.9556);'>Type here to search</div>
<div class='t' style='left:1361.10px;top:1051px;font-size:15.12px;line-height:17px;color:#fff;font-weight:400;font-style:normal;font-family:"Liberation Sans",sans-serif;transform:scaleX(0.9000);'>84°F</div>
<div class='t' style='left:1397.07px;top:1051px;font-size:15.12px;line-height:17px;color:#fff;font-weight:400;font-style:normal;font-family:"Liberation Sans",sans-serif;transform:scaleX(0.9268);'>Partly sunny</div>
<div class='t' style='left:1813.75px;top:1043px;font-size:13.08px;line-height:15px;color:#fff;font-weight:400;font-style:normal;font-family:"Liberation Sans",sans-serif;transform:scaleX(0.8802);'>4:49 PM</div>
<div class='t' style='left:1809.00px;top:1061px;font-size:13.66px;line-height:15px;color:#fff;font-weight:400;font-style:normal;font-family:"Liberation Sans",sans-serif;transform:scaleX(0.8600);'>4/26/2023</div>
</body></html>
